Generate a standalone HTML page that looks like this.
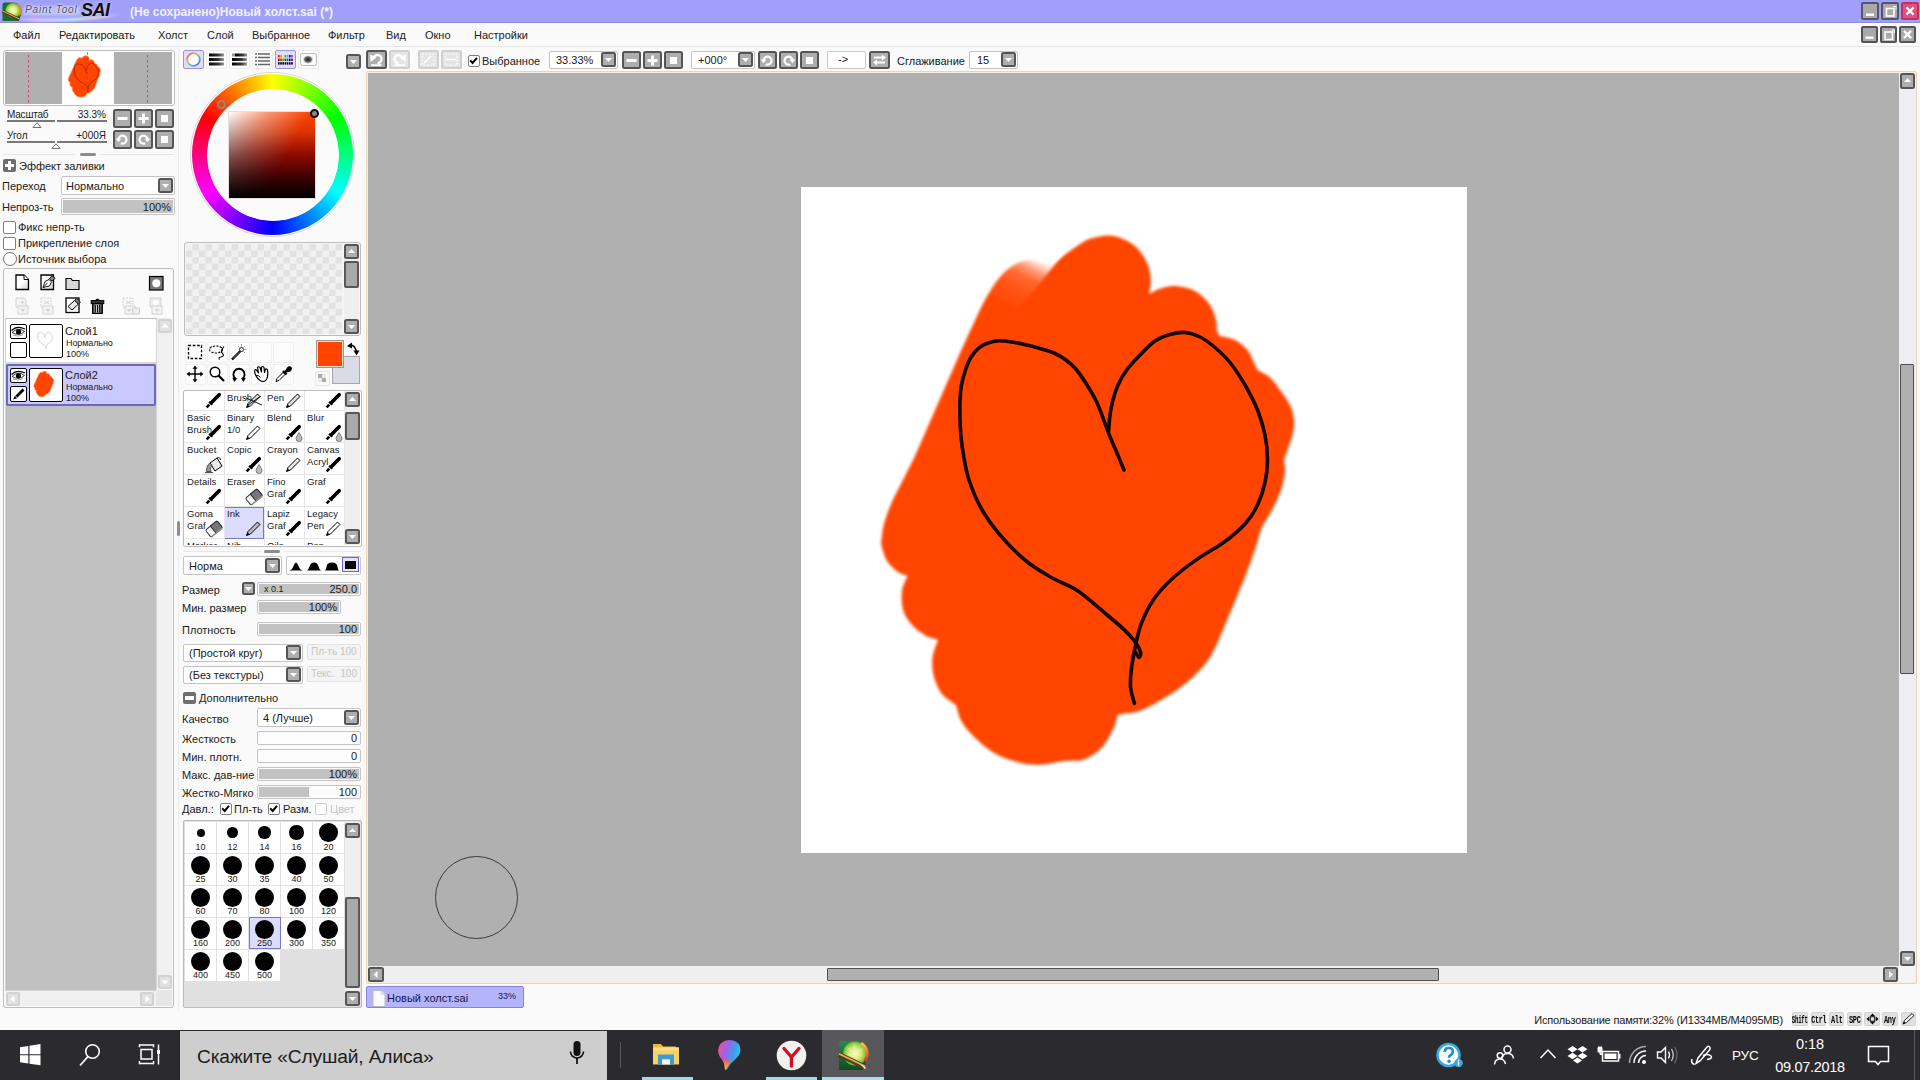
<!DOCTYPE html>
<html lang="ru"><head><meta charset="utf-8"><title>PaintTool SAI</title>
<style>
*{box-sizing:content-box;margin:0;padding:0}
html,body{width:1920px;height:1080px;overflow:hidden;background:#fafafa;font-family:"Liberation Sans",sans-serif;font-size:11px;color:#202020}
div,span,i{position:absolute}
.t{white-space:nowrap;line-height:13px;font-size:11px;color:#202020}
.b{background:#aeaeae;border:2px solid #555;border-radius:2.500px}
.bd{background:#e4e4e4;border:2px solid #d0d0d0;border-radius:2px}
.sl{border:1px solid #c4c4c4;border-radius:2px;background:#fcfcfc;overflow:hidden;white-space:nowrap;font-size:11px;line-height:13px}
.sl i{left:1px;top:1px;bottom:1px;background:#c2c2c2}
.sl .r{right:3px;top:50%;margin-top:-6px}
.sl .l{left:6px;top:50%;margin-top:-6px;font-size:9px}
.cb{border:1px solid #c4c4c4;border-radius:2px;background:#fff;white-space:nowrap;font-size:11px;line-height:13px}
.cb span{top:50%;margin-top:-6px}
.pn{border:1px solid #cfcfcf;border-radius:2px}
</style></head>
<body>
<div style="left:0px;top:0px;width:1920px;height:22px;background:#a0a0fb"></div>
<div style="left:0px;top:22px;width:1920px;height:1px;background:#8c8cd8"></div>
<svg width="20" height="19" viewBox="0 0 20 19" style="position:absolute;left:2px;top:2px;overflow:visible" ><defs><radialGradient id="lg" cx="0.500" cy="0.500" r="0.550"><stop offset="0" stop-color="#fbfad0"/><stop offset="0.450" stop-color="#dcec70"/><stop offset="0.800" stop-color="#7cc840"/><stop offset="1" stop-color="#38a038"/></radialGradient></defs>
<path d="M0.500 3q0-2.500 2.500-2.500h8q8.500 0.500 8.500 9q0 4-1.500 6l-1.500 3.500h-16z" fill="#1a6a34"/><circle cx="11" cy="8.500" r="7.600" fill="url(#lg)"/><path d="M15 2.200a7.600 7.600 0 0 1 2.200 11" fill="none" stroke="#f08830" stroke-width="1.800"/><path d="M0.500 9.500l17 8" stroke="#5a3a18" stroke-width="3.200"/><path d="M0.500 9l17 8" stroke="#d8b868" stroke-width="1"/></svg>
<svg width="115" height="20" viewBox="0 0 115 20" style="position:absolute;left:18px;top:2px;overflow:visible" ><defs><linearGradient id="sw" x1="0" x2="1"><stop offset="0" stop-color="#e8d0f8" stop-opacity="0.200"/><stop offset="0.150" stop-color="#f0c8e8"/><stop offset="0.350" stop-color="#c8e0ff"/><stop offset="0.550" stop-color="#d8f8d0"/><stop offset="0.750" stop-color="#fff0c0"/><stop offset="0.900" stop-color="#f8c0e0"/><stop offset="1" stop-color="#a0a0fb" stop-opacity="0"/></linearGradient><filter id="swb"><feGaussianBlur stdDeviation="0.800"/></filter></defs>
<path d="M2 15.500 Q50 19.500 108 11.500 Q62 22 2 18.500z" fill="url(#sw)" filter="url(#swb)"/><path d="M6 6 Q30 2 62 5 L62 13 Q30 15 4 13z" fill="#e4e4ff" opacity=".450" filter="url(#swb)"/></svg>
<div class="t" style="left:25px;top:3px;font-style:italic;font-size:10px;letter-spacing:0.850px;color:#505064;line-height:13px;text-shadow:0 0 2px #e8e8ff,0 0 3px #e8e8ff">Paint Tool</div>
<div class="t" style="left:81px;top:-1px;font-style:italic;font-weight:bold;font-size:18px;letter-spacing:-0.500px;color:#101010;line-height:22px;text-shadow:0 0 3px #d8d8ff">SAI</div>
<div class="t" style="left:130px;top:5px;font-weight:bold;color:#f2f2ff;font-size:12px;line-height:14px;letter-spacing:0.020px">(Не сохранено)Новый холст.sai (*)</div>
<div style="left:1861px;top:2px;width:14px;height:14px;background:#a9a9a9;border:2px solid #55556a;border-radius:2px"><svg width="14" height="14" style="position:absolute;left:0;top:0"><rect x="3.0" y="9.5" width="8" height="2.4" fill="#fff"/></svg></div>
<div style="left:1881px;top:2px;width:14px;height:14px;background:#a9a9a9;border:2px solid #55556a;border-radius:2px"><svg width="14" height="14" style="position:absolute;left:0;top:0"><rect x="3.5" y="4.5" width="7.5" height="7.5" fill="none" stroke="#fff" stroke-width="1.6"/><path d="M10.0 2.5h3v3" fill="none" stroke="#fff" stroke-width="1"/></svg></div>
<div style="left:1901px;top:2px;width:14px;height:14px;background:#e0507a;border:2px solid #c03060;border-radius:2px"><svg width="14" height="14" style="position:absolute;left:0;top:0"><path d="M3.4000000000000004 3.4000000000000004l7.2 7.2m0 -7.2l-7.2 7.2" stroke="#fff" stroke-width="2.2" fill="none"/></svg></div>
<div class="t" style="left:13px;top:29px;">Файл</div>
<div class="t" style="left:59px;top:29px;">Редактировать</div>
<div class="t" style="left:158px;top:29px;">Холст</div>
<div class="t" style="left:207px;top:29px;">Слой</div>
<div class="t" style="left:252px;top:29px;">Выбранное</div>
<div class="t" style="left:328px;top:29px;">Фильтр</div>
<div class="t" style="left:386px;top:29px;">Вид</div>
<div class="t" style="left:425px;top:29px;">Окно</div>
<div class="t" style="left:474px;top:29px;">Настройки</div>
<div style="left:0px;top:46px;width:1920px;height:1px;background:#e6e6e6"></div>
<div style="left:1861px;top:26px;width:13px;height:13px;background:#a9a9a9;border:2px solid #545454;border-radius:2px"><svg width="13" height="13" style="position:absolute;left:0;top:0"><rect x="2.5" y="8.5" width="8" height="2.4" fill="#fff"/></svg></div>
<div style="left:1880px;top:26px;width:13px;height:13px;background:#a9a9a9;border:2px solid #545454;border-radius:2px"><svg width="13" height="13" style="position:absolute;left:0;top:0"><rect x="3.0" y="4.0" width="7.5" height="7.5" fill="none" stroke="#fff" stroke-width="1.6"/><path d="M9.5 2.0h3v3" fill="none" stroke="#fff" stroke-width="1"/></svg></div>
<div style="left:1899px;top:26px;width:13px;height:13px;background:#a9a9a9;border:2px solid #545454;border-radius:2px"><svg width="13" height="13" style="position:absolute;left:0;top:0"><path d="M2.9000000000000004 2.9000000000000004l7.2 7.2m0 -7.2l-7.2 7.2" stroke="#fff" stroke-width="2.2" fill="none"/></svg></div>
<div style="left:3px;top:50px;width:170px;height:54px;border:1px solid #bdbdbd;border-radius:3px;background:#fdfdfd"></div>
<div style="left:5px;top:52px;width:167px;height:52px;background:#b0b0b0"></div>
<div style="left:62px;top:52px;width:52px;height:52px;background:#fff"></div>
<svg width="52" height="52" viewBox="0 0 52 52" style="position:absolute;left:62px;top:52px"><path d="M6.2 27.9C6.3 27.6 6.3 26.9 6.5 26.3C6.6 25.8 6.9 25.2 7.1 24.6C7.4 24.0 7.7 23.5 8.0 22.9C8.3 22.3 8.6 21.7 8.9 21.0C9.2 20.3 9.6 19.3 10.0 18.5C10.4 17.7 10.7 16.8 11.1 16.0C11.5 15.2 11.9 14.2 12.2 13.5C12.5 12.8 12.7 12.4 12.9 11.9C13.1 11.5 13.1 11.4 13.4 10.9C13.6 10.3 14.0 9.4 14.4 8.8C14.7 8.2 15.0 7.7 15.3 7.3C15.7 6.8 16.0 6.5 16.3 6.3C16.6 6.0 17.0 5.9 17.3 5.8C17.6 5.7 18.0 5.7 18.3 5.7C18.6 5.7 18.9 6.0 19.2 6.0C19.5 6.0 19.7 5.9 19.9 5.8C20.2 5.7 20.3 5.5 20.7 5.2C21.1 5.0 21.8 4.4 22.2 4.2C22.6 4.0 22.8 4.0 23.2 3.9C23.5 3.8 23.8 3.8 24.1 3.8C24.5 3.8 24.8 3.9 25.1 4.0C25.4 4.2 25.8 4.3 26.1 4.6C26.4 4.9 26.7 5.3 26.9 5.6C27.1 6.0 27.2 6.3 27.2 6.7C27.3 7.0 27.3 7.4 27.3 7.7C27.3 7.9 27.2 8.2 27.2 8.3C27.3 8.3 27.7 8.0 28.0 7.9C28.3 7.8 28.7 7.7 29.0 7.7C29.3 7.7 29.7 7.8 30.0 7.8C30.3 7.9 30.6 8.0 31.0 8.2C31.3 8.5 31.7 8.9 31.9 9.2C32.2 9.6 32.3 10.0 32.4 10.4C32.5 10.7 32.4 11.0 32.5 11.2C32.5 11.5 32.7 11.6 32.7 11.6C32.9 11.7 33.5 11.8 33.9 11.9C34.2 12.1 34.6 12.4 34.9 12.7C35.1 13.0 35.2 13.4 35.4 13.7C35.5 14.0 35.6 14.2 35.6 14.3C35.8 14.4 36.3 14.6 36.6 14.9C36.9 15.1 37.1 15.5 37.4 15.8C37.7 16.2 38.0 16.6 38.2 17.0C38.4 17.4 38.5 17.8 38.5 18.2C38.5 18.6 38.5 19.0 38.4 19.4C38.3 19.8 38.1 20.2 38.0 20.5C37.9 20.9 37.8 21.2 37.7 21.3C37.7 21.4 37.8 21.8 37.8 22.1C37.8 22.4 37.7 22.9 37.6 23.3C37.5 23.7 37.3 24.0 37.2 24.4C37.0 24.8 36.7 25.3 36.5 25.6C36.3 26.0 36.1 26.3 35.9 26.7C35.8 27.1 35.7 27.5 35.5 28.1C35.3 28.7 35.0 29.5 34.7 30.3C34.4 31.1 34.1 31.9 33.7 32.7C33.4 33.5 33.0 34.5 32.7 35.1C32.4 35.8 32.2 36.3 31.9 36.8C31.6 37.3 31.3 37.6 30.9 38.0C30.5 38.4 30.0 38.8 29.5 39.2C29.0 39.6 28.4 39.9 27.9 40.2C27.3 40.5 26.9 40.8 26.4 40.9C26.0 41.1 25.5 41.1 25.2 41.1C24.9 41.2 24.8 41.2 24.7 41.2C24.7 41.4 24.6 41.8 24.4 42.2C24.2 42.6 23.9 43.3 23.6 43.6C23.3 44.0 22.9 44.3 22.6 44.5C22.3 44.7 22.1 44.7 21.8 44.8C21.4 44.8 21.1 44.8 20.6 44.8C20.0 44.9 19.2 45.1 18.6 45.1C18.0 45.1 17.4 45.0 16.9 44.9C16.3 44.8 15.7 44.5 15.1 44.2C14.6 43.9 14.1 43.5 13.6 43.0C13.2 42.6 12.8 42.2 12.5 41.7C12.3 41.3 12.2 40.7 12.1 40.4C11.9 40.3 11.3 39.9 11.0 39.6C10.7 39.2 10.5 38.7 10.4 38.3C10.3 37.8 10.2 37.2 10.3 36.8C10.3 36.3 10.6 35.6 10.7 35.3C10.5 35.3 10.1 35.2 9.7 35.0C9.4 34.8 8.9 34.5 8.6 34.2C8.4 33.8 8.1 33.5 8.0 33.1C7.9 32.6 7.8 32.0 7.9 31.5C7.9 31.1 8.2 30.6 8.3 30.4C8.2 30.3 7.8 30.2 7.6 30.0C7.3 29.8 6.9 29.5 6.7 29.2C6.5 28.8 6.3 28.1 6.2 27.9Z" fill="#ff4500" stroke="#ff8a50" stroke-width="0.800"/><path d="M25.2 22.1C25.1 21.9 24.9 21.2 24.7 20.8C24.5 20.3 24.3 20.0 24.1 19.5C23.9 19.0 23.8 18.5 23.6 18.0C23.4 17.6 23.2 17.1 23.0 16.7C22.8 16.2 22.6 15.9 22.3 15.5C22.1 15.1 21.8 14.6 21.5 14.3C21.3 14.0 21.0 13.7 20.7 13.5C20.4 13.3 20.1 13.1 19.8 13.0C19.4 12.8 19.0 12.7 18.7 12.6C18.3 12.5 18.0 12.4 17.6 12.3C17.3 12.3 16.8 12.2 16.5 12.1C16.1 12.0 15.8 12.0 15.5 12.0C15.1 12.0 14.9 12.1 14.6 12.2C14.3 12.3 14.1 12.4 13.9 12.6C13.7 12.7 13.4 13.0 13.3 13.3C13.1 13.6 13.0 13.9 12.8 14.3C12.7 14.7 12.6 15.1 12.5 15.5C12.5 15.9 12.4 16.2 12.4 16.7C12.4 17.1 12.4 17.6 12.4 18.0C12.4 18.5 12.4 19.0 12.5 19.5C12.5 20.0 12.6 20.6 12.7 21.2C12.8 21.7 12.9 22.2 13.1 22.9C13.3 23.5 13.6 24.3 14.1 25.1C14.5 25.8 15.0 26.5 15.6 27.2C16.2 27.9 16.9 28.6 17.5 29.2C18.2 29.7 18.8 30.1 19.5 30.5C20.2 30.8 20.9 31.1 21.6 31.5C22.3 32.0 23.2 32.8 23.8 33.3C24.4 33.8 24.8 34.2 25.2 34.6C25.6 34.9 25.8 35.2 26.0 35.4C26.2 35.7 26.4 36.1 26.5 36.3C26.6 36.5 26.4 36.7 26.4 36.7C26.3 36.7 26.2 36.4 26.2 36.4" fill="none" stroke="#601000" stroke-width="0.500"/><path d="M24.0 19.1C24.0 18.8 24.1 18.2 24.1 17.8C24.2 17.4 24.2 17.1 24.3 16.7C24.4 16.3 24.6 15.9 24.8 15.5C24.9 15.1 25.1 14.7 25.4 14.3C25.7 13.9 26.1 13.5 26.5 13.1C26.8 12.7 27.2 12.3 27.6 12.0C28.0 11.8 28.4 11.6 28.8 11.5C29.2 11.4 29.6 11.3 30.0 11.4C30.4 11.4 30.8 11.5 31.2 11.7C31.5 11.9 31.9 12.2 32.3 12.5C32.7 12.9 33.1 13.2 33.5 13.7C33.9 14.2 34.3 14.8 34.7 15.5C35.0 16.1 35.4 16.8 35.6 17.4C35.9 18.1 36.1 18.7 36.2 19.4C36.4 20.0 36.4 20.7 36.4 21.3C36.4 21.9 36.4 22.5 36.2 23.1C36.1 23.7 35.9 24.3 35.6 24.8C35.4 25.4 35.2 25.8 34.7 26.2C34.3 26.7 33.7 27.2 33.1 27.7C32.5 28.2 31.6 28.6 30.9 29.1C30.2 29.6 29.4 30.1 28.9 30.7C28.3 31.2 27.8 31.7 27.5 32.3C27.1 32.9 26.8 33.6 26.5 34.2C26.3 34.7 26.3 35.2 26.1 35.8C26.0 36.3 25.9 36.8 25.8 37.4C25.8 37.9 25.7 38.5 25.7 39.0C25.8 39.5 26.0 40.1 26.0 40.3" fill="none" stroke="#601000" stroke-width="0.500"/></svg>
<svg width="167" height="52" viewBox="0 0 167 52" style="position:absolute;left:5px;top:52px;overflow:visible" ><path d="M23.5 3v48M142.5 3v48" stroke="#e0407a" stroke-width="1" stroke-dasharray="2.5 2.5" fill="none"/><path d="M82.5 0v30" stroke="#e03060" stroke-width="1" stroke-dasharray="3 2" opacity=".7"/></svg>
<div class="t" style="left:7px;top:108px;font-size:10px;letter-spacing:-0.2px">Масштаб</div>
<div class="t" style="right:1814px;top:108px;font-size:10px">33.3%</div>
<div style="left:7px;top:120px;width:48px;height:2px;background:#787878"></div>
<div style="left:57px;top:120px;width:50px;height:2px;background:#787878"></div>
<svg width="11" height="6" viewBox="0 0 11 6" style="position:absolute;left:32px;top:122px;overflow:visible" ><path d="M1 5.5L5 0.8L9 5.5z" fill="#fff" stroke="#707070" stroke-width="1"/></svg>
<div class="t" style="left:7px;top:129px;font-size:10px">Угол</div>
<div class="t" style="right:1814px;top:129px;font-size:10px">+000Я</div>
<div style="left:7px;top:141px;width:48px;height:2px;background:#787878"></div>
<div style="left:57px;top:141px;width:50px;height:2px;background:#787878"></div>
<svg width="11" height="6" viewBox="0 0 11 6" style="position:absolute;left:51px;top:143px;overflow:visible" ><path d="M1 5.5L5 0.8L9 5.5z" fill="#fff" stroke="#707070" stroke-width="1"/></svg>
<div class="b" style="left:113px;top:109px;width:15px;height:15px"><svg width="15" height="15" style="position:absolute;left:0;top:0"><rect x="2.5" y="6" width="10" height="3" fill="#fff"/></svg></div>
<div class="b" style="left:134px;top:109px;width:15px;height:15px"><svg width="15" height="15" style="position:absolute;left:0;top:0"><rect x="2.5" y="6" width="10" height="3" fill="#fff"/><rect x="6" y="2.5" width="3" height="10" fill="#fff"/></svg></div>
<div class="b" style="left:155px;top:109px;width:15px;height:15px"><svg width="15" height="15" style="position:absolute;left:0;top:0"><rect x="4" y="4" width="7" height="7" fill="#fff"/></svg></div>
<div class="b" style="left:113px;top:130px;width:15px;height:15px"><svg width="15" height="15" style="position:absolute;left:0;top:0"><path d="M3.500 7.500A4 4 0 1 1 5.800 11.200" fill="none" stroke="#fff" stroke-width="2.200"/><path d="M0.600 6.400h5.800l-2.900 3.800z" fill="#fff"/></svg></div>
<div class="b" style="left:134px;top:130px;width:15px;height:15px"><svg width="15" height="15" style="position:absolute;left:0;top:0"><path d="M11.500 7.500A4 4 0 1 0 9.200 11.200" fill="none" stroke="#fff" stroke-width="2.200"/><path d="M14.400 6.400h-5.800l2.900 3.800z" fill="#fff"/></svg></div>
<div class="b" style="left:155px;top:130px;width:15px;height:15px"><svg width="15" height="15" style="position:absolute;left:0;top:0"><rect x="4" y="4" width="7" height="7" fill="#fff"/></svg></div>
<div style="left:3px;top:154px;width:72px;height:1px;background:#e4e4e4"></div>
<div style="left:100px;top:154px;width:74px;height:1px;background:#e4e4e4"></div>
<div style="left:80px;top:153px;width:16px;height:3px;background:#8c8c8c;border-radius:2px"></div>
<div style="left:3px;top:159px;width:13px;height:13px;background:#6e6e6e;border-radius:2px"></div>
<div style="left:5px;top:164px;width:9px;height:3px;background:#fff"></div>
<div style="left:8px;top:161px;width:3px;height:9px;background:#fff"></div>
<div class="t" style="left:19px;top:160px;">Эффект заливки</div>
<div class="t" style="left:2px;top:180px;">Переход</div>
<div class="cb" style="left:61px;top:176px;width:112px;height:17px"><span style="left:4px">Нормально</span></div>
<div class="b" style="left:158px;top:178px;width:11px;height:11px"><svg width="11" height="11" style="position:absolute;left:0;top:0"><path d="M2.0 4.0h7l-3.5 4z" fill="#fff"/></svg></div>
<div class="t" style="left:2px;top:201px;">Непроз-ть</div>
<div class="sl" style="left:61px;top:198px;width:112px;height:15px"><i style="width:110px"></i><span class="l"></span><span class="r">100%</span></div>
<div style="left:3px;top:221px;width:11px;height:11px;border:1px solid #808080;border-radius:2px;background:#fff"></div>
<div class="t" style="left:18px;top:221px;">Фикс непр-ть</div>
<div style="left:3px;top:237px;width:11px;height:11px;border:1px solid #808080;border-radius:2px;background:#fff"></div>
<div class="t" style="left:18px;top:237px;">Прикрепление слоя</div>
<div style="left:3px;top:252px;width:12px;height:12px;border:1px solid #707070;border-radius:7px;background:#fff"></div>
<div class="t" style="left:18px;top:253px;">Источник выбора</div>
<div style="left:3px;top:268px;width:169px;height:738px;border:1px solid #bcbcbc;border-radius:3px;background:#fafafa"></div>
<svg width="15" height="17" viewBox="0 0 15 17" style="position:absolute;left:15px;top:274px;overflow:visible" ><defs><linearGradient id="pg" x1="0" y1="0" x2="1" y2="1"><stop offset="0.5" stop-color="#fff"/><stop offset="1" stop-color="#ccc"/></linearGradient></defs><path d="M1 1h8l4.5 4.5v10h-12.5z" fill="url(#pg)" stroke="#000" stroke-width="1.3"/><path d="M9 1v4.5h4.5" fill="#fff" stroke="#000" stroke-width="1"/></svg>
<svg width="16" height="17" viewBox="0 0 16 17" style="position:absolute;left:40px;top:274px;overflow:visible" ><path d="M1 1h12.5v14.5h-12.5z" fill="url(#pg)" stroke="#000" stroke-width="1.3"/><path d="M3 13.5l2-6l4-2l2.5 2.5l-2 4z" fill="#fff" stroke="#000" stroke-width="0.9"/><path d="M3 13.5l4.5-4.5" stroke="#000" stroke-width="0.8"/><path d="M9.5 5l2.5-3.5l3 3l-3 2.5z" fill="#888" stroke="#000" stroke-width="0.9"/></svg>
<svg width="16" height="14" viewBox="0 0 16 14" style="position:absolute;left:65px;top:277px;overflow:visible" ><path d="M1 12.5v-11h5l1.5 2h6.5v9z" fill="#d8d8d8" stroke="#000" stroke-width="1.2"/></svg>
<svg width="15" height="15" viewBox="0 0 15 15" style="position:absolute;left:149px;top:276px;overflow:visible" ><rect x="0.5" y="0.5" width="13.5" height="13.5" fill="#787878" stroke="#000" stroke-width="1.2"/><circle cx="7.3" cy="7.3" r="4" fill="#fff"/></svg>
<svg width="16" height="18" viewBox="0 0 16 18" style="position:absolute;left:15px;top:297px;overflow:visible" ><path d="M1 1h8l2 2v7h-10z" fill="#f4f4f4" stroke="#d2d2d2"/><path d="M3 9h10v8h-10z" fill="#f4f4f4" stroke="#d2d2d2"/><path d="M5.5 5.5h4m-2-2v4" stroke="#d2d2d2"/><path d="M5.5 12h5l-2.5 3z" fill="#d2d2d2"/></svg>
<svg width="16" height="18" viewBox="0 0 16 18" style="position:absolute;left:40px;top:297px;overflow:visible" ><path d="M1 1h10v9h-10z" fill="#f8f8f8" stroke="#d2d2d2" stroke-dasharray="2 1"/><path d="M3 9h10v8h-10z" fill="#f4f4f4" stroke="#d2d2d2"/><path d="M4 4l5 3m0-3l-5 3" stroke="#d2d2d2"/><path d="M5.5 12h5l-2.5 3z" fill="#d2d2d2"/></svg>
<svg width="16" height="18" viewBox="0 0 16 18" style="position:absolute;left:65px;top:297px;overflow:visible" ><rect x="1" y="1" width="13" height="14.5" fill="#fff" stroke="#000" stroke-width="1.3"/><path d="M3 9.5l6.5-6l4 3.5l-6.5 6z" fill="#e8e8e8" stroke="#000" stroke-width="1"/><path d="M9.5 3.5l2-2l4 3.5l-2 2z" fill="#777" stroke="#000" stroke-width="0.8"/></svg>
<svg width="15" height="18" viewBox="0 0 15 18" style="position:absolute;left:90px;top:297px;overflow:visible" ><defs><linearGradient id="tg" x1="0" x2="1"><stop offset="0" stop-color="#555"/><stop offset="0.450" stop-color="#d8d8d8"/><stop offset="1" stop-color="#444"/></linearGradient></defs><path d="M2.700 6.500h9.600v9.800h-9.600z" fill="url(#tg)" stroke="#000" stroke-width="1.300"/><path d="M5.300 8v7.500M7.500 8v7.500M9.700 8v7.500" stroke="#000" stroke-width="1"/><rect x="1.200" y="3.600" width="12.600" height="3" fill="#333" stroke="#000" stroke-width="1"/><path d="M5.800 3.400q1.700-2.600 3.400 0" fill="none" stroke="#000" stroke-width="1.300"/></svg>
<svg width="18" height="18" viewBox="0 0 18 18" style="position:absolute;left:122px;top:297px;overflow:visible" ><path d="M1 1h10v9h-10z" fill="#f8f8f8" stroke="#d2d2d2" stroke-dasharray="2 1"/><path d="M3 9h10v8h-10z" fill="#f4f4f4" stroke="#d2d2d2"/><path d="M10.500 11h7v6h-7z" fill="#ececec" stroke="#d2d2d2"/><path d="M4 4l5 3m0-3l-5 3" stroke="#d2d2d2"/><path d="M4.5 12h5l-2.5 3z" fill="#d2d2d2"/></svg>
<svg width="16" height="18" viewBox="0 0 16 18" style="position:absolute;left:149px;top:297px;overflow:visible" ><path d="M1 1h11v9h-11z" fill="#ececec" stroke="#d2d2d2"/><circle cx="6.500" cy="5.500" r="2.800" fill="#fff"/><path d="M3 9h10v8h-10z" fill="#f6f6f6" stroke="#d2d2d2"/><path d="M5.500 13h5m-2.500-2.500v5" stroke="#d2d2d2"/></svg>
<div style="left:5px;top:318px;width:150px;height:671px;background:#c0c0c0;border:1px solid #d4d4d4;border-top-color:#c0c0c0"></div>
<div style="left:6px;top:319px;width:150px;height:43px;background:#fff"></div>
<div style="left:6px;top:362px;width:150px;height:2px;background:#d8d8d8"></div>
<div style="left:6px;top:364px;width:146px;height:37.5px;background:#c9c9ff;border:2px solid #6c66c4;border-radius:2px"></div>
<div style="left:10px;top:324px;width:15px;height:13px;border:1px solid #000;border-radius:2px;background:#fff;overflow:hidden"><svg width="17" height="15" viewBox="0 0 17 15" style="position:absolute;left:0;top:0;left:-1px;top:-1px"><path d="M2 8.500 Q8 2.500 14.500 7.500 Q9 12.500 2 8.500z" fill="#fff" stroke="#000" stroke-width="0.8"/><circle cx="8.500" cy="7.800" r="2.600" fill="#000"/><path d="M1.500 6.500 Q7 1 15 5" fill="none" stroke="#000" stroke-width="1.100"/><path d="M3 11 Q8 13.500 13 10.500" fill="none" stroke="#555" stroke-width="0.600"/></svg></div>
<div style="left:10px;top:342px;width:15px;height:14px;border:1px solid #000;border-radius:2px;background:#fff;overflow:hidden"></div>
<div style="left:29px;top:324px;width:32px;height:32px;border:1px solid #000;border-radius:2px;background:#fff;overflow:hidden"><svg width="32" height="32" viewBox="0 0 32 32" style="position:absolute;left:0;top:0;"><path d="M15.5 13.6C15.5 13.5 15.3 13.0 15.2 12.8C15.1 12.5 15.0 12.3 14.8 12.0C14.7 11.7 14.6 11.4 14.5 11.1C14.4 10.8 14.3 10.5 14.2 10.3C14.0 10.0 13.9 9.8 13.7 9.5C13.6 9.3 13.4 9.0 13.2 8.8C13.1 8.6 12.9 8.4 12.7 8.3C12.6 8.2 12.4 8.1 12.2 8.0C11.9 7.9 11.7 7.8 11.5 7.8C11.3 7.7 11.1 7.6 10.8 7.6C10.6 7.5 10.4 7.5 10.1 7.4C9.9 7.4 9.7 7.4 9.5 7.4C9.3 7.4 9.1 7.4 9.0 7.5C8.8 7.6 8.7 7.6 8.6 7.7C8.4 7.8 8.3 8.0 8.2 8.2C8.1 8.3 8.0 8.6 7.9 8.8C7.8 9.0 7.8 9.3 7.7 9.5C7.7 9.8 7.7 10.0 7.6 10.3C7.6 10.5 7.6 10.8 7.6 11.1C7.6 11.4 7.7 11.7 7.7 12.0C7.7 12.3 7.8 12.7 7.8 13.0C7.9 13.4 7.9 13.7 8.1 14.1C8.2 14.5 8.4 15.0 8.6 15.4C8.9 15.9 9.2 16.3 9.6 16.7C9.9 17.2 10.4 17.6 10.8 17.9C11.2 18.3 11.6 18.5 12.0 18.7C12.4 19.0 12.9 19.1 13.3 19.4C13.8 19.7 14.3 20.2 14.7 20.5C15.0 20.8 15.3 21.0 15.5 21.3C15.7 21.5 15.9 21.6 16.0 21.8C16.2 22.0 16.3 22.2 16.3 22.3C16.3 22.5 16.3 22.6 16.2 22.6C16.2 22.6 16.1 22.4 16.1 22.4" fill="none" stroke="#aaa" stroke-width="0.500"/><path d="M14.8 11.7C14.8 11.6 14.8 11.2 14.8 11.0C14.9 10.7 14.9 10.5 15.0 10.3C15.0 10.0 15.1 9.8 15.2 9.5C15.3 9.3 15.5 9.0 15.6 8.8C15.8 8.6 16.1 8.3 16.3 8.1C16.5 7.8 16.8 7.6 17.0 7.4C17.2 7.2 17.5 7.2 17.7 7.1C18.0 7.0 18.2 7.0 18.5 7.0C18.7 7.0 18.9 7.1 19.2 7.2C19.4 7.3 19.7 7.5 19.9 7.7C20.1 7.9 20.4 8.1 20.6 8.4C20.9 8.7 21.1 9.1 21.3 9.5C21.6 9.9 21.8 10.3 21.9 10.7C22.1 11.1 22.2 11.5 22.3 11.9C22.4 12.3 22.4 12.7 22.4 13.1C22.4 13.5 22.4 13.8 22.3 14.2C22.2 14.6 22.1 15.0 21.9 15.3C21.8 15.6 21.6 15.9 21.4 16.1C21.1 16.4 20.8 16.7 20.4 17.0C20.0 17.3 19.4 17.6 19.0 17.9C18.6 18.2 18.1 18.6 17.8 18.9C17.4 19.2 17.1 19.5 16.9 19.9C16.7 20.2 16.5 20.7 16.3 21.0C16.2 21.4 16.2 21.7 16.1 22.0C16.0 22.3 15.9 22.7 15.9 23.0C15.9 23.3 15.8 23.7 15.8 24.0C15.9 24.3 16.0 24.7 16.0 24.8" fill="none" stroke="#aaa" stroke-width="0.500"/></svg></div>
<div style="left:10px;top:368px;width:15px;height:13px;border:1px solid #000;border-radius:2px;background:#fff;overflow:hidden"><svg width="17" height="15" viewBox="0 0 17 15" style="position:absolute;left:0;top:0;left:-1px;top:-1px"><path d="M2 8.500 Q8 2.500 14.500 7.500 Q9 12.500 2 8.500z" fill="#fff" stroke="#000" stroke-width="0.8"/><circle cx="8.500" cy="7.800" r="2.600" fill="#000"/><path d="M1.500 6.500 Q7 1 15 5" fill="none" stroke="#000" stroke-width="1.100"/><path d="M3 11 Q8 13.500 13 10.500" fill="none" stroke="#555" stroke-width="0.600"/></svg></div>
<div style="left:10px;top:386px;width:15px;height:14px;border:1px solid #000;border-radius:2px;background:#fff;overflow:hidden"><svg width="17" height="16" viewBox="0 0 17 16" style="position:absolute;left:0;top:0;left:-1px;top:-1px"><path d="M3 13.500l1.500-3l8-8l2 2l-8 8z" fill="#000"/><path d="M5.200 9.800l1.800 1.800" stroke="#fff" stroke-width="1"/></svg></div>
<div style="left:29px;top:368px;width:32px;height:32px;border:1px solid #000;border-radius:2px;background:#fff;overflow:hidden"><svg width="32" height="32" viewBox="0 0 32 32" style="position:absolute;left:0;top:0;"><path d="M3.8 17.2C3.9 17.0 3.9 16.5 4.0 16.2C4.1 15.9 4.2 15.5 4.4 15.1C4.5 14.8 4.7 14.4 4.9 14.1C5.1 13.7 5.3 13.4 5.5 12.9C5.7 12.5 5.9 11.9 6.2 11.4C6.4 10.9 6.6 10.4 6.8 9.8C7.0 9.3 7.3 8.7 7.5 8.3C7.7 7.9 7.8 7.6 7.9 7.4C8.1 7.1 8.1 7.0 8.2 6.7C8.4 6.4 8.6 5.8 8.8 5.4C9.0 5.1 9.2 4.7 9.4 4.5C9.6 4.2 9.8 4.0 10.0 3.9C10.2 3.7 10.4 3.6 10.6 3.6C10.8 3.5 11.0 3.5 11.2 3.5C11.4 3.5 11.7 3.7 11.8 3.7C12.0 3.7 12.1 3.6 12.3 3.6C12.4 3.5 12.5 3.4 12.7 3.2C13.0 3.0 13.4 2.7 13.6 2.6C13.9 2.5 14.0 2.4 14.2 2.4C14.4 2.4 14.6 2.3 14.8 2.3C15.0 2.3 15.2 2.4 15.4 2.5C15.6 2.6 15.9 2.7 16.0 2.8C16.2 3.0 16.4 3.2 16.5 3.4C16.6 3.7 16.7 3.9 16.8 4.1C16.8 4.3 16.8 4.5 16.8 4.7C16.8 4.9 16.7 5.1 16.7 5.1C16.8 5.1 17.1 5.0 17.2 4.9C17.4 4.8 17.6 4.8 17.8 4.8C18.1 4.7 18.3 4.8 18.5 4.8C18.7 4.9 18.9 4.9 19.1 5.1C19.3 5.2 19.5 5.4 19.7 5.7C19.8 5.9 19.9 6.2 19.9 6.4C20.0 6.6 20.0 6.8 20.0 6.9C20.0 7.0 20.1 7.1 20.1 7.2C20.3 7.2 20.6 7.2 20.9 7.4C21.1 7.5 21.3 7.7 21.5 7.8C21.6 8.0 21.7 8.3 21.8 8.4C21.8 8.6 21.9 8.7 21.9 8.8C22.0 8.9 22.4 9.0 22.5 9.2C22.7 9.3 22.9 9.5 23.0 9.8C23.2 10.0 23.4 10.2 23.5 10.5C23.6 10.7 23.7 11.0 23.7 11.2C23.7 11.4 23.7 11.7 23.6 11.9C23.6 12.2 23.4 12.4 23.4 12.6C23.3 12.8 23.2 13.0 23.2 13.1C23.2 13.2 23.3 13.4 23.3 13.6C23.2 13.8 23.2 14.1 23.1 14.3C23.1 14.6 23.0 14.8 22.9 15.0C22.8 15.3 22.6 15.6 22.5 15.8C22.4 16.0 22.2 16.2 22.1 16.4C22.0 16.7 22.0 16.9 21.9 17.3C21.7 17.7 21.6 18.2 21.4 18.6C21.2 19.1 21.0 19.6 20.8 20.1C20.6 20.6 20.3 21.2 20.1 21.6C19.9 22.0 19.8 22.3 19.6 22.6C19.4 22.9 19.3 23.1 19.0 23.4C18.8 23.6 18.4 23.9 18.1 24.1C17.8 24.3 17.5 24.6 17.1 24.7C16.8 24.9 16.5 25.1 16.3 25.2C16.0 25.3 15.7 25.3 15.5 25.3C15.3 25.3 15.3 25.4 15.2 25.4C15.2 25.5 15.1 25.7 15.0 26.0C14.9 26.2 14.7 26.6 14.5 26.9C14.3 27.1 14.1 27.2 13.9 27.4C13.7 27.5 13.6 27.5 13.4 27.6C13.2 27.6 13.0 27.5 12.7 27.6C12.3 27.6 11.8 27.7 11.5 27.8C11.1 27.8 10.7 27.7 10.4 27.6C10.0 27.5 9.7 27.4 9.3 27.2C9.0 27.0 8.7 26.7 8.4 26.5C8.1 26.2 7.9 26.0 7.7 25.7C7.6 25.4 7.5 25.0 7.4 24.9C7.3 24.8 7.0 24.6 6.8 24.4C6.6 24.1 6.5 23.8 6.4 23.5C6.3 23.3 6.3 22.9 6.3 22.6C6.4 22.3 6.5 21.9 6.6 21.8C6.5 21.7 6.2 21.7 6.0 21.5C5.8 21.4 5.5 21.2 5.3 21.0C5.1 20.8 5.0 20.6 4.9 20.3C4.8 20.1 4.8 19.7 4.9 19.4C4.9 19.1 5.1 18.8 5.1 18.7C5.0 18.6 4.8 18.6 4.7 18.5C4.5 18.4 4.3 18.2 4.1 17.9C4.0 17.7 3.9 17.3 3.8 17.2Z" fill="#ff4500" stroke="#ff7a40" stroke-width="0.600"/></svg></div>
<div class="t" style="left:65px;top:325px;font-size:11px">Слой1</div>
<div class="t" style="left:66px;top:338px;font-size:9px;letter-spacing:-0.1px;line-height:11px">Нормально</div>
<div class="t" style="left:66px;top:349px;font-size:9px;line-height:11px">100%</div>
<div class="t" style="left:65px;top:369px;font-size:11px">Слой2</div>
<div class="t" style="left:66px;top:382px;font-size:9px;letter-spacing:-0.1px;line-height:11px">Нормально</div>
<div class="t" style="left:66px;top:393px;font-size:9px;line-height:11px">100%</div>
<div style="left:157px;top:318px;width:15px;height:671px;background:#f0f0f0"></div>
<div style="left:158px;top:319px;width:10px;height:10px;background:#e2e2e2;border:2px solid #d2d2d2;border-radius:2px"><svg width="10" height="10" style="position:absolute;left:0;top:0"><path d="M1.500 6.500h7l-3.500-4z" fill="#fff"/></svg></div>
<div style="left:158px;top:975px;width:10px;height:10px;background:#e2e2e2;border:2px solid #d2d2d2;border-radius:2px"><svg width="10" height="10" style="position:absolute;left:0;top:0"><path d="M1.500 3.500h7l-3.500 4z" fill="#fff"/></svg></div>
<div style="left:6px;top:991px;width:150px;height:15px;background:#f0f0f0"></div>
<div style="left:156px;top:990px;width:16px;height:16px;background:#e6e6e6"></div>
<div style="left:6px;top:992px;width:10px;height:10px;background:#e2e2e2;border:2px solid #d2d2d2;border-radius:2px"><svg width="10" height="10" style="position:absolute;left:0;top:0"><path d="M6.500 1.500v7l-4-3.500z" fill="#fff"/></svg></div>
<div style="left:140px;top:992px;width:10px;height:10px;background:#e2e2e2;border:2px solid #d2d2d2;border-radius:2px"><svg width="10" height="10" style="position:absolute;left:0;top:0"><path d="M3.500 1.500v7l4-3.500z" fill="#fff"/></svg></div>
<div style="left:178px;top:47px;width:1px;height:963px;background:#ececec"></div>
<div style="left:177px;top:521px;width:3px;height:15px;background:#8e8e8e;border-radius:1.500px"></div>
<div style="left:183px;top:50px;width:19px;height:17px;background:#e4dcff;border:1px solid #9a94d8;border-radius:2px"></div>
<div style="left:206px;top:50px;width:19px;height:17px;background:#fcfcfc;border:1px solid #ececec;border-radius:2px"></div>
<div style="left:229px;top:50px;width:19px;height:17px;background:#fcfcfc;border:1px solid #ececec;border-radius:2px"></div>
<div style="left:252px;top:50px;width:19px;height:17px;background:#fcfcfc;border:1px solid #ececec;border-radius:2px"></div>
<div style="left:275px;top:50px;width:19px;height:17px;background:#e4dcff;border:1px solid #9a94d8;border-radius:2px"></div>
<div style="left:298px;top:50px;width:19px;height:17px;background:#fcfcfc;border:1px solid #ececec;border-radius:2px"></div>
<svg width="21" height="19" viewBox="0 0 21 19" style="position:absolute;left:183px;top:50px;overflow:visible" ><defs><linearGradient id="rg" x1="0" y1="0" x2="1" y2="1"><stop offset="0" stop-color="#f04080"/><stop offset="0.35" stop-color="#e0c030"/><stop offset="0.65" stop-color="#40c0e0"/><stop offset="1" stop-color="#8040e0"/></linearGradient></defs><circle cx="10.500" cy="9.500" r="6.300" fill="#fff" stroke="url(#rg)" stroke-width="1.800"/></svg>
<svg width="21" height="19" viewBox="0 0 21 19" style="position:absolute;left:206px;top:50px;overflow:visible" ><defs><linearGradient id="bw" x1="0" x2="1"><stop offset="0" stop-color="#000"/><stop offset="0.6" stop-color="#333"/><stop offset="1" stop-color="#999"/></linearGradient></defs><rect x="3" y="3.500" width="15" height="3" fill="url(#bw)"/><rect x="3" y="8" width="15" height="3" fill="url(#bw)"/><rect x="3" y="12.500" width="15" height="3" fill="url(#bw)"/></svg>
<svg width="21" height="19" viewBox="0 0 21 19" style="position:absolute;left:229px;top:50px;overflow:visible" ><rect x="6" y="3.500" width="12" height="3" fill="url(#bw)"/><rect x="3" y="8" width="15" height="3" fill="url(#bw)"/><rect x="3" y="12.500" width="15" height="3" fill="url(#bw)"/><rect x="3" y="3.500" width="3" height="3" fill="#999"/></svg>
<svg width="21" height="19" viewBox="0 0 21 19" style="position:absolute;left:252px;top:50px;overflow:visible" ><g stroke="#666" stroke-width="1.300"><path d="M3 4h15M3 7.500h15M3 11h15M3 14.500h15" stroke-dasharray="2 1 12 0"/></g></svg>
<svg width="21" height="19" viewBox="0 0 21 19" style="position:absolute;left:275px;top:50px;overflow:visible" ><rect x="3.0" y="5.0" width="1.600" height="2.400" fill="#f00"/><rect x="5.2" y="5.0" width="1.600" height="2.400" fill="#f80"/><rect x="7.4" y="5.0" width="1.600" height="2.400" fill="#ff0"/><rect x="9.6" y="5.0" width="1.600" height="2.400" fill="#0c0"/><rect x="11.8" y="5.0" width="1.600" height="2.400" fill="#0cf"/><rect x="14.0" y="5.0" width="1.600" height="2.400" fill="#00f"/><rect x="16.2" y="5.0" width="1.600" height="2.400" fill="#c0f"/><rect x="3.0" y="8.6" width="1.600" height="2.400" fill="#800"/><rect x="5.2" y="8.6" width="1.600" height="2.400" fill="#840"/><rect x="7.4" y="8.6" width="1.600" height="2.400" fill="#880"/><rect x="9.6" y="8.6" width="1.600" height="2.400" fill="#060"/><rect x="11.8" y="8.6" width="1.600" height="2.400" fill="#068"/><rect x="14.0" y="8.6" width="1.600" height="2.400" fill="#008"/><rect x="16.2" y="8.6" width="1.600" height="2.400" fill="#606"/><rect x="3.0" y="12.2" width="1.600" height="2.400" fill="#000"/><rect x="5.2" y="12.2" width="1.600" height="2.400" fill="#000"/><rect x="7.4" y="12.2" width="1.600" height="2.400" fill="#000"/><rect x="9.6" y="12.2" width="1.600" height="2.400" fill="#000"/><rect x="11.8" y="12.2" width="1.600" height="2.400" fill="#000"/><rect x="14.0" y="12.2" width="1.600" height="2.400" fill="#000"/><rect x="16.2" y="12.2" width="1.600" height="2.400" fill="#000"/></svg>
<svg width="21" height="19" viewBox="0 0 21 19" style="position:absolute;left:298px;top:50px;overflow:visible" ><defs><radialGradient id="sm"><stop offset="0" stop-color="#222"/><stop offset="0.6" stop-color="#666"/><stop offset="1" stop-color="#ccc" stop-opacity="0"/></radialGradient></defs><rect x="2.500" y="3.500" width="16" height="12" rx="2" fill="#fafafa" stroke="#b8b8b8"/><ellipse cx="10" cy="9.500" rx="5.500" ry="4.500" fill="url(#sm)"/></svg>
<div class="b" style="left:346px;top:54px;width:11px;height:11px"><svg width="11" height="11" style="position:absolute;left:0;top:0"><path d="M2.0 4.0h7l-3.5 4z" fill="#fff"/></svg></div>
<div style="left:190px;top:72px;width:163px;height:163px;border-radius:50%;background:#fff;border:1px solid #dcd4dc"></div>
<div style="left:192px;top:74px;width:161px;height:161px;border-radius:50%;background:conic-gradient(#ff0,#0f0 60deg,#0ff 120deg,#00f 180deg,#f0f 240deg,#f00 300deg,#ff0 360deg)"></div>
<div style="left:206.5px;top:88.5px;width:130px;height:130px;border-radius:50%;background:#fbfbfb;border:1px solid #fff"></div>
<div style="left:228px;top:111px;width:86px;height:86px;border:1px solid #e8e0e0;background:linear-gradient(to bottom,#ff4500 0%,#e03400 22%,#8c0a00 50%,#420000 75%,#000 100%)"></div>
<div style="left:229px;top:112px;width:86px;height:86px;background:linear-gradient(to bottom,#fff,#000);-webkit-mask-image:linear-gradient(118deg,#000 0%,rgba(0,0,0,.45) 30%,transparent 62%);mask-image:linear-gradient(118deg,#000 0%,rgba(0,0,0,.45) 30%,transparent 62%)"></div>
<div style="left:217px;top:100px;width:5px;height:5px;border:2px solid #8a8a8a;border-radius:50%"></div>
<div style="left:310px;top:109px;width:5px;height:5px;border:2px solid #111;border-radius:50%;background:#888"></div>
<div style="left:184px;top:242px;width:175px;height:92px;border:1px solid #bcbcbc;border-radius:3px;background:#f6f6f6"></div>
<div style="left:186px;top:244px;width:156px;height:90px;background-color:#f1f1f1;background-image:linear-gradient(45deg,#dedede 25%,transparent 25%,transparent 75%,#dedede 75%),linear-gradient(45deg,#dedede 25%,transparent 25%,transparent 75%,#dedede 75%);background-size:13px 13px;background-position:0 0,6.500px 6.500px;opacity:.85"></div>
<div style="left:344px;top:244px;width:15px;height:90px;background:#efefef"></div>
<div class="b" style="left:344px;top:244px;width:11px;height:11px"><svg width="11" height="11" style="position:absolute;left:0;top:0"><path d="M2 7h7l-3.500-4z" fill="#fff"/></svg></div>
<div class="b" style="left:344px;top:319px;width:11px;height:11px"><svg width="11" height="11" style="position:absolute;left:0;top:0"><path d="M2 4h7l-3.500 4z" fill="#fff"/></svg></div>
<div style="left:344px;top:261px;width:11px;height:23px;background:#a9a9a9;border:2px solid #575757;border-radius:2px"></div>
<div style="left:185px;top:342px;width:19px;height:19px;border:1px solid #f0f0f0;border-radius:2px;background:#fcfcfc"></div>
<div style="left:207px;top:342px;width:19px;height:19px;border:1px solid #f0f0f0;border-radius:2px;background:#fcfcfc"></div>
<div style="left:229px;top:342px;width:19px;height:19px;border:1px solid #f0f0f0;border-radius:2px;background:#fcfcfc"></div>
<div style="left:251px;top:342px;width:19px;height:19px;border:1px solid #f0f0f0;border-radius:2px;background:#fcfcfc"></div>
<div style="left:273px;top:342px;width:19px;height:19px;border:1px solid #f0f0f0;border-radius:2px;background:#fcfcfc"></div>
<div style="left:185px;top:364px;width:19px;height:19px;border:1px solid #f0f0f0;border-radius:2px;background:#fcfcfc"></div>
<div style="left:207px;top:364px;width:19px;height:19px;border:1px solid #f0f0f0;border-radius:2px;background:#fcfcfc"></div>
<div style="left:229px;top:364px;width:19px;height:19px;border:1px solid #f0f0f0;border-radius:2px;background:#fcfcfc"></div>
<div style="left:251px;top:364px;width:19px;height:19px;border:1px solid #f0f0f0;border-radius:2px;background:#fcfcfc"></div>
<div style="left:273px;top:364px;width:19px;height:19px;border:1px solid #f0f0f0;border-radius:2px;background:#fcfcfc"></div>
<svg width="20" height="20" viewBox="0 0 20 20" style="position:absolute;left:185px;top:342px;overflow:visible" ><rect x="3.500" y="3.500" width="13" height="13" fill="none" stroke="#000" stroke-width="1.300" stroke-dasharray="2.600 1.700"/></svg>
<svg width="20" height="20" viewBox="0 0 20 20" style="position:absolute;left:207px;top:342px;overflow:visible" ><ellipse cx="9" cy="7.500" rx="6.500" ry="3.500" fill="none" stroke="#000" stroke-width="1.100" stroke-dasharray="2.200 1.200"/><path d="M17 4.500 Q13 9 15.500 11.500 Q18 14 14 15 Q11 15.500 12.500 17.500" fill="none" stroke="#000" stroke-width="1.100"/></svg>
<svg width="20" height="20" viewBox="0 0 20 20" style="position:absolute;left:229px;top:342px;overflow:visible" ><path d="M3 17.500l8.500-8.500" stroke="#000" stroke-width="2.400"/><path d="M4 16.500l7-7" stroke="#999" stroke-width="0.800"/><circle cx="12.500" cy="7.500" r="2" fill="#fff" stroke="#000" stroke-width="0.800"/><path d="M12.500 2v2.500M17.500 7.500h-2.200M16 4l-1.500 1.500M16 11l-1.500-1.500M9 4l1.500 1.500" stroke="#777" stroke-width="0.700"/></svg>
<svg width="20" height="20" viewBox="0 0 20 20" style="position:absolute;left:185px;top:364px;overflow:visible" ><path d="M10 3v14M3 10h14" stroke="#000" stroke-width="1.400"/><path d="M10 1.500l-2.400 3.200h4.800zM10 18.500l-2.400-3.200h4.800zM1.500 10l3.200-2.400v4.800zM18.500 10l-3.200-2.400v4.800z" fill="#000"/></svg>
<svg width="20" height="20" viewBox="0 0 20 20" style="position:absolute;left:207px;top:364px;overflow:visible" ><circle cx="8" cy="8" r="4.800" fill="#fff" stroke="#000" stroke-width="1.400"/><path d="M11.500 11.500l5.500 5.500" stroke="#000" stroke-width="2.200"/></svg>
<svg width="20" height="20" viewBox="0 0 20 20" style="position:absolute;left:229px;top:364px;overflow:visible" ><path d="M6.800 15 A5.600 5.600 0 1 1 13.200 15" fill="none" stroke="#000" stroke-width="1.900"/><path d="M3.200 13.800l4.800 0.400l-2.600 3.800z M16.800 13.800l-4.800 0.400l2.600 3.800z" fill="#000"/></svg>
<svg width="20" height="20" viewBox="0 0 20 20" style="position:absolute;left:251px;top:364px;overflow:visible" ><path d="M4 9.500 Q3 6 5 5.500 L7.500 9 L6.500 3.500 Q8 2 9 3.500 L10.500 8 L10.500 3 Q12 1.800 13 3.500 L13.500 8.500 L14.500 5 Q16 4.500 16.500 6 Q17.500 12 15.500 15.500 Q13.500 18.500 10 17 Q6 15 4 9.500z" fill="#fff" stroke="#000" stroke-width="1.200" stroke-linejoin="round"/><path d="M5 11.500 Q8 11 9.500 13.500" fill="none" stroke="#000" stroke-width="1"/></svg>
<svg width="20" height="20" viewBox="0 0 20 20" style="position:absolute;left:273px;top:364px;overflow:visible" ><path d="M3 17.500l1-3l6.500-6.500l2 2l-6.500 6.500z" fill="#fff" stroke="#000" stroke-width="1"/><path d="M10 7l3.500 3.500" stroke="#000" stroke-width="2.400"/><path d="M11.500 8.500l3-4.500q2-2 3.500-0.500q1 1.500-1 3.500z" fill="#000" stroke="#000" stroke-width="1.200"/></svg>
<div style="left:332px;top:356px;width:26px;height:26px;background:#d9dbe7;border:1px solid #a8a8a8"></div>
<div style="left:316px;top:340px;width:24px;height:24px;background:#ff4500;border:2px solid #f6dcc4;outline:1px solid #9a9a9a;outline-offset:-1px"></div>
<div style="left:316px;top:340px;width:26px;height:26px;border:1px solid #999"></div>
<svg width="16" height="16" viewBox="0 0 16 16" style="position:absolute;left:346px;top:341px;overflow:visible" ><path d="M3 4.500 Q9 3 10.500 11" fill="none" stroke="#000" stroke-width="1.500"/><path d="M1 5l5-3.500v6z M10.500 14.500l-3-5h6z" fill="#000"/></svg>
<div style="left:315px;top:371px;width:13px;height:13px;border:1px solid #e4e4e4;border-radius:2px;background:#fafafa"></div>
<div style="left:318px;top:374px;width:4px;height:4px;background:#aaa"></div>
<div style="left:322px;top:378px;width:4px;height:4px;background:#aaa"></div>
<div style="left:322px;top:374px;width:4px;height:4px;background:#e8e8e8"></div>
<div style="left:318px;top:378px;width:4px;height:4px;background:#e8e8e8"></div>
<div style="left:183px;top:390px;width:177px;height:155px;border:1px solid #bcbcbc;border-radius:2px;background:#fff;overflow:hidden"></div>
<div style="left:184px;top:391px;width:161px;height:154px;overflow:hidden">
<div style="left:0;top:19px;width:161px;height:1px;background:#e6e6e6"></div>
<svg width="20" height="20" viewBox="0 0 20 20" style="position:absolute;left:20px;top:-1px"><path d="M7 13L15.200 4.800" stroke="#000" stroke-width="3.700" stroke-linecap="round"/><path d="M5.900 14.100L7.300 12.700" stroke="#000" stroke-width="4.300"/><path d="M2.600 17.400L5.300 14.700" stroke="#000" stroke-width="2.600"/><path d="M4.600 13.400l2 2" stroke="#fff" stroke-width="0.900"/></svg>
<div class="t" style="left:43px;top:1px;font-size:9.500px;letter-spacing:0.050px;line-height:12px">Brush</div>
<svg width="20" height="20" viewBox="0 0 20 20" style="position:absolute;left:60px;top:-1px"><path d="M2.500 17.500l1.500-4l9.500-9.500l2.500 2.500l-9.500 9.500z" fill="#ddd" stroke="#000" stroke-width="1"/><path d="M2.500 17.500l1.200-3l1.800 1.800z" fill="#000"/><path d="M2 8l16 7M4 15l13-9" stroke="#000" stroke-width="0.900"/></svg>
<div class="t" style="left:83px;top:1px;font-size:9.500px;letter-spacing:0.050px;line-height:12px">Pen</div>
<svg width="20" height="20" viewBox="0 0 20 20" style="position:absolute;left:100px;top:-1px"><path d="M2.500 17.500l1.500-4l9.500-9.500l2.500 2.500l-9.500 9.500z" fill="#ddd" stroke="#000" stroke-width="1"/><path d="M2.500 17.500l1.200-3l1.800 1.800z" fill="#000"/></svg>
<svg width="20" height="20" viewBox="0 0 20 20" style="position:absolute;left:140px;top:-1px"><path d="M7 13L15.200 4.800" stroke="#000" stroke-width="3.700" stroke-linecap="round"/><path d="M5.900 14.100L7.300 12.700" stroke="#000" stroke-width="4.300"/><path d="M2.600 17.400L5.300 14.700" stroke="#000" stroke-width="2.600"/><path d="M4.600 13.400l2 2" stroke="#fff" stroke-width="0.900"/></svg>
<div style="left:0;top:51px;width:161px;height:1px;background:#e6e6e6"></div>
<div class="t" style="left:3px;top:21px;font-size:9.500px;letter-spacing:0.050px;line-height:12px">Basic</div>
<div class="t" style="left:3px;top:33px;font-size:9.500px;letter-spacing:0.050px;line-height:12px">Brush</div>
<svg width="20" height="20" viewBox="0 0 20 20" style="position:absolute;left:20px;top:31px"><path d="M7 13L15.200 4.800" stroke="#000" stroke-width="3.700" stroke-linecap="round"/><path d="M5.900 14.100L7.300 12.700" stroke="#000" stroke-width="4.300"/><path d="M2.600 17.400L5.300 14.700" stroke="#000" stroke-width="2.600"/><path d="M4.600 13.400l2 2" stroke="#fff" stroke-width="0.900"/></svg>
<div class="t" style="left:43px;top:21px;font-size:9.500px;letter-spacing:0.050px;line-height:12px">Binary</div>
<div class="t" style="left:43px;top:33px;font-size:9.500px;letter-spacing:0.050px;line-height:12px">1/0</div>
<svg width="20" height="20" viewBox="0 0 20 20" style="position:absolute;left:60px;top:31px"><path d="M2.500 17.500l1.500-4l9.500-9.500l2.500 2.500l-9.500 9.500z" fill="#fff" stroke="#000" stroke-width="1"/><path d="M2.500 17.500l1.200-3l1.800 1.800z" fill="#000"/></svg>
<div class="t" style="left:83px;top:21px;font-size:9.500px;letter-spacing:0.050px;line-height:12px">Blend</div>
<svg width="20" height="20" viewBox="0 0 20 20" style="position:absolute;left:100px;top:31px"><path d="M7 13L15.200 4.800" stroke="#000" stroke-width="3.700" stroke-linecap="round"/><path d="M5.900 14.100L7.300 12.700" stroke="#000" stroke-width="4.300"/><path d="M2.600 17.400L5.300 14.700" stroke="#000" stroke-width="2.600"/><path d="M4.600 13.400l2 2" stroke="#fff" stroke-width="0.900"/><path d="M15 10.500q3 4.500 3 6a3 3 0 0 1-6 0q0-1.500 3-6z" fill="#bbb" stroke="#666" stroke-width="0.800"/></svg>
<div class="t" style="left:123px;top:21px;font-size:9.500px;letter-spacing:0.050px;line-height:12px">Blur</div>
<svg width="20" height="20" viewBox="0 0 20 20" style="position:absolute;left:140px;top:31px"><path d="M7 13L15.200 4.800" stroke="#000" stroke-width="3.700" stroke-linecap="round"/><path d="M5.900 14.100L7.300 12.700" stroke="#000" stroke-width="4.300"/><path d="M2.600 17.400L5.300 14.700" stroke="#000" stroke-width="2.600"/><path d="M4.600 13.400l2 2" stroke="#fff" stroke-width="0.900"/><path d="M15 10.500q3 4.500 3 6a3 3 0 0 1-6 0q0-1.500 3-6z" fill="#bbb" stroke="#666" stroke-width="0.800"/></svg>
<div style="left:0;top:83px;width:161px;height:1px;background:#e6e6e6"></div>
<div class="t" style="left:3px;top:53px;font-size:9.500px;letter-spacing:0.050px;line-height:12px">Bucket</div>
<svg width="20" height="20" viewBox="0 0 20 20" style="position:absolute;left:20px;top:63px"><path d="M6 9l7-5l5 8l-7 5z" fill="#e8e8e8" stroke="#000" stroke-width="1"/><path d="M13 4q3-1.500 3.500 2" fill="none" stroke="#000" stroke-width="1"/><path d="M6 9q-3.500 2-3.500 8.500h4.500q-1.500-4 1-6.500z" fill="#999" stroke="#333" stroke-width="0.800"/><path d="M1 18.500h8" stroke="#555" stroke-width="1.200"/></svg>
<div class="t" style="left:43px;top:53px;font-size:9.500px;letter-spacing:0.050px;line-height:12px">Copic</div>
<svg width="20" height="20" viewBox="0 0 20 20" style="position:absolute;left:60px;top:63px"><path d="M7 13L15.200 4.800" stroke="#000" stroke-width="3.700" stroke-linecap="round"/><path d="M5.900 14.100L7.300 12.700" stroke="#000" stroke-width="4.300"/><path d="M2.600 17.400L5.300 14.700" stroke="#000" stroke-width="2.600"/><path d="M4.600 13.400l2 2" stroke="#fff" stroke-width="0.900"/><path d="M15 10.500q3 4.500 3 6a3 3 0 0 1-6 0q0-1.500 3-6z" fill="#bbb" stroke="#666" stroke-width="0.800"/></svg>
<div class="t" style="left:83px;top:53px;font-size:9.500px;letter-spacing:0.050px;line-height:12px">Crayon</div>
<svg width="20" height="20" viewBox="0 0 20 20" style="position:absolute;left:100px;top:63px"><path d="M2.500 17.500l1.500-4l9.500-9.500l2.500 2.500l-9.500 9.500z" fill="#e8e8e8" stroke="#000" stroke-width="1"/><path d="M2.500 17.500l1.200-3l1.800 1.800z" fill="#000"/></svg>
<div class="t" style="left:123px;top:53px;font-size:9.500px;letter-spacing:0.050px;line-height:12px">Canvas</div>
<div class="t" style="left:123px;top:65px;font-size:9.500px;letter-spacing:0.050px;line-height:12px">Acryl</div>
<svg width="20" height="20" viewBox="0 0 20 20" style="position:absolute;left:140px;top:63px"><path d="M7 13L15.200 4.800" stroke="#000" stroke-width="3.700" stroke-linecap="round"/><path d="M5.900 14.100L7.300 12.700" stroke="#000" stroke-width="4.300"/><path d="M2.600 17.400L5.300 14.700" stroke="#000" stroke-width="2.600"/><path d="M4.600 13.400l2 2" stroke="#fff" stroke-width="0.900"/></svg>
<div style="left:0;top:115px;width:161px;height:1px;background:#e6e6e6"></div>
<div class="t" style="left:3px;top:85px;font-size:9.500px;letter-spacing:0.050px;line-height:12px">Details</div>
<svg width="20" height="20" viewBox="0 0 20 20" style="position:absolute;left:20px;top:95px"><path d="M7 13L15.200 4.800" stroke="#000" stroke-width="3.700" stroke-linecap="round"/><path d="M5.900 14.100L7.300 12.700" stroke="#000" stroke-width="4.300"/><path d="M2.600 17.400L5.300 14.700" stroke="#000" stroke-width="2.600"/><path d="M4.600 13.400l2 2" stroke="#fff" stroke-width="0.900"/></svg>
<div class="t" style="left:43px;top:85px;font-size:9.500px;letter-spacing:0.050px;line-height:12px">Eraser</div>
<svg width="20" height="20" viewBox="0 0 20 20" style="position:absolute;left:60px;top:95px"><g transform="rotate(-40 10 11)"><rect x="2.500" y="6.500" width="15" height="9" rx="1.800" fill="#f4f4f4" stroke="#333" stroke-width="1"/><path d="M9 6.500h6.700a1.800 1.800 0 0 1 1.800 1.800v5.400a1.800 1.800 0 0 1-1.800 1.800h-6.700z" fill="#777" stroke="#333" stroke-width="1"/><path d="M3 15.500h14" stroke="#999" stroke-width="1.200"/></g></svg>
<div class="t" style="left:83px;top:85px;font-size:9.500px;letter-spacing:0.050px;line-height:12px">Fino</div>
<div class="t" style="left:83px;top:97px;font-size:9.500px;letter-spacing:0.050px;line-height:12px">Graf</div>
<svg width="20" height="20" viewBox="0 0 20 20" style="position:absolute;left:100px;top:95px"><path d="M7 13L15.200 4.800" stroke="#000" stroke-width="3.700" stroke-linecap="round"/><path d="M5.900 14.100L7.300 12.700" stroke="#000" stroke-width="4.300"/><path d="M2.600 17.400L5.300 14.700" stroke="#000" stroke-width="2.600"/><path d="M4.600 13.400l2 2" stroke="#fff" stroke-width="0.900"/></svg>
<div class="t" style="left:123px;top:85px;font-size:9.500px;letter-spacing:0.050px;line-height:12px">Graf</div>
<svg width="20" height="20" viewBox="0 0 20 20" style="position:absolute;left:140px;top:95px"><path d="M7 13L15.200 4.800" stroke="#000" stroke-width="3.700" stroke-linecap="round"/><path d="M5.900 14.100L7.300 12.700" stroke="#000" stroke-width="4.300"/><path d="M2.600 17.400L5.300 14.700" stroke="#000" stroke-width="2.600"/><path d="M4.600 13.400l2 2" stroke="#fff" stroke-width="0.900"/></svg>
<div style="left:0;top:147px;width:161px;height:1px;background:#e6e6e6"></div>
<div class="t" style="left:3px;top:117px;font-size:9.500px;letter-spacing:0.050px;line-height:12px">Goma</div>
<div class="t" style="left:3px;top:129px;font-size:9.500px;letter-spacing:0.050px;line-height:12px">Graf</div>
<svg width="20" height="20" viewBox="0 0 20 20" style="position:absolute;left:20px;top:127px"><g transform="rotate(-40 10 11)"><rect x="2.500" y="6.500" width="15" height="9" rx="1.800" fill="#f4f4f4" stroke="#333" stroke-width="1"/><path d="M9 6.500h6.700a1.800 1.800 0 0 1 1.800 1.800v5.400a1.800 1.800 0 0 1-1.800 1.800h-6.700z" fill="#777" stroke="#333" stroke-width="1"/><path d="M3 15.500h14" stroke="#999" stroke-width="1.200"/></g></svg>
<div style="left:40px;top:116px;width:38px;height:30px;background:#dcdcff;border:1px solid #7a76c8"></div>
<div class="t" style="left:43px;top:117px;font-size:9.500px;letter-spacing:0.050px;line-height:12px">Ink</div>
<svg width="20" height="20" viewBox="0 0 20 20" style="position:absolute;left:60px;top:127px"><path d="M2.500 17.500l1.500-4l9.500-9.500l2.500 2.500l-9.500 9.500z" fill="#bbb" stroke="#000" stroke-width="1"/><path d="M2.500 17.500l1.200-3l1.800 1.800z" fill="#000"/></svg>
<div class="t" style="left:83px;top:117px;font-size:9.500px;letter-spacing:0.050px;line-height:12px">Lapiz</div>
<div class="t" style="left:83px;top:129px;font-size:9.500px;letter-spacing:0.050px;line-height:12px">Graf</div>
<svg width="20" height="20" viewBox="0 0 20 20" style="position:absolute;left:100px;top:127px"><path d="M7 13L15.200 4.800" stroke="#000" stroke-width="3.700" stroke-linecap="round"/><path d="M5.900 14.100L7.300 12.700" stroke="#000" stroke-width="4.300"/><path d="M2.600 17.400L5.300 14.700" stroke="#000" stroke-width="2.600"/><path d="M4.600 13.400l2 2" stroke="#fff" stroke-width="0.900"/></svg>
<div class="t" style="left:123px;top:117px;font-size:9.500px;letter-spacing:0.050px;line-height:12px">Legacy</div>
<div class="t" style="left:123px;top:129px;font-size:9.500px;letter-spacing:0.050px;line-height:12px">Pen</div>
<svg width="20" height="20" viewBox="0 0 20 20" style="position:absolute;left:140px;top:127px"><path d="M2.500 17.500l1.500-4l9.500-9.500l2.500 2.500l-9.500 9.500z" fill="#fff" stroke="#000" stroke-width="1"/><path d="M2.500 17.500l1.200-3l1.800 1.800z" fill="#000"/></svg>
<div style="left:0;top:179px;width:161px;height:1px;background:#e6e6e6"></div>
<div class="t" style="left:3px;top:149px;font-size:9.500px;letter-spacing:0.050px;line-height:12px">Marker</div>
<div class="t" style="left:43px;top:149px;font-size:9.500px;letter-spacing:0.050px;line-height:12px">Nib</div>
<div class="t" style="left:83px;top:149px;font-size:9.500px;letter-spacing:0.050px;line-height:12px">Oils</div>
<div class="t" style="left:123px;top:149px;font-size:9.500px;letter-spacing:0.050px;line-height:12px">Pen</div>
<div style="left:40px;top:0;width:1px;height:154px;background:#e6e6e6"></div>
<div style="left:80px;top:0;width:1px;height:154px;background:#e6e6e6"></div>
<div style="left:120px;top:0;width:1px;height:154px;background:#e6e6e6"></div>
<div style="left:160px;top:0;width:1px;height:154px;background:#e6e6e6"></div>
</div>
<div style="left:345px;top:391px;width:15px;height:154px;background:#efefef"></div>
<div class="b" style="left:345px;top:392px;width:11px;height:11px"><svg width="11" height="11" style="position:absolute;left:0;top:0"><path d="M2 7h7l-3.500-4z" fill="#fff"/></svg></div>
<div class="b" style="left:345px;top:529px;width:11px;height:11px"><svg width="11" height="11" style="position:absolute;left:0;top:0"><path d="M2 4h7l-3.500 4z" fill="#fff"/></svg></div>
<div style="left:345px;top:412px;width:11px;height:24px;background:#a9a9a9;border:2px solid #575757;border-radius:2px"></div>
<div style="left:264px;top:550px;width:16px;height:3px;background:#8c8c8c;border-radius:2px"></div>
<div style="left:183px;top:551px;width:78px;height:1px;background:#e8e8e8"></div>
<div style="left:284px;top:551px;width:77px;height:1px;background:#e8e8e8"></div>
<div class="cb" style="left:183px;top:556px;width:97px;height:17px"><span style="left:5px">Норма</span></div>
<div class="b" style="left:265px;top:558px;width:11px;height:11px"><svg width="11" height="11" style="position:absolute;left:0;top:0"><path d="M2.0 4.0h7l-3.5 4z" fill="#fff"/></svg></div>
<div style="left:286px;top:556px;width:73px;height:17px;border:1px solid #c8c8c8;border-radius:2px;background:#fff"></div>
<svg width="73" height="17" viewBox="0 0 73 17" style="position:absolute;left:287px;top:557px;overflow:visible" ><path d="M2 13.500h14q-3-0.500-4.500-4.500q-1.200-3.500-2.500-3.500q-1.300 0-2.500 3.500q-1.500 4-4.500 4.500z" fill="#000"/><path d="M20 13.500h14q-1.800-1-2.600-4.200q-0.800-3.800-4.400-3.800q-3.600 0-4.400 3.800q-0.800 3.200-2.600 4.200z" fill="#000"/><path d="M38 13.500h14q-1.200-1-1.500-3.500q-0.300-4.500-5.500-4.500q-5.200 0-5.500 4.500q-0.300 2.500-1.500 3.500z" fill="#000"/></svg>
<div style="left:342px;top:557px;width:15px;height:13px;background:#e4e0ff;border:1px solid #6c66c4"></div>
<div style="left:345px;top:561px;width:11px;height:8px;background:#000"></div>
<div class="t" style="left:182px;top:584px;">Размер</div>
<div class="b" style="left:242px;top:582px;width:9px;height:9px"><svg width="9" height="9" style="position:absolute;left:0;top:0"><path d="M1.0 3.0h7l-3.5 4z" fill="#fff"/></svg></div>
<div class="sl" style="left:257px;top:582px;width:102px;height:12px"><i style="width:100px"></i><span class="l">x 0.1</span><span class="r">250.0</span></div>
<div class="t" style="left:182px;top:602px;">Мин. размер</div>
<div class="sl" style="left:257px;top:600px;width:82px;height:12px"><i style="width:80px"></i><span class="l"></span><span class="r">100%</span></div>
<div class="t" style="left:182px;top:624px;">Плотность</div>
<div class="sl" style="left:257px;top:622px;width:102px;height:12px"><i style="width:100px"></i><span class="l"></span><span class="r">100</span></div>
<div class="cb" style="left:183px;top:644px;width:118px;height:16px"><span style="left:5px">(Простой круг)</span></div>
<div class="b" style="left:286px;top:645px;width:11px;height:11px"><svg width="11" height="11" style="position:absolute;left:0;top:0"><path d="M2.0 4.0h7l-3.5 4z" fill="#fff"/></svg></div>
<div style="left:307px;top:644px;width:52px;height:14px;border:1px solid #e2e2e2;border-radius:2px;background:#f4f4f4"></div>
<div class="t" style="left:311px;top:645px;color:#c4c4c4;font-size:10px">Пл-ть 100</div>
<div class="cb" style="left:183px;top:666px;width:118px;height:16px"><span style="left:5px">(Без текстуры)</span></div>
<div class="b" style="left:286px;top:667px;width:11px;height:11px"><svg width="11" height="11" style="position:absolute;left:0;top:0"><path d="M2.0 4.0h7l-3.5 4z" fill="#fff"/></svg></div>
<div style="left:307px;top:666px;width:52px;height:14px;border:1px solid #e2e2e2;border-radius:2px;background:#f4f4f4"></div>
<div class="t" style="left:311px;top:667px;color:#c4c4c4;font-size:10px">Текс.</div>
<div class="t" style="right:1563px;top:667px;color:#c4c4c4;font-size:10px">100</div>
<div style="left:183px;top:692px;width:13px;height:12px;background:#6e6e6e;border-radius:2px"></div>
<div style="left:185px;top:696px;width:9px;height:4px;background:#fff"></div>
<div class="t" style="left:199px;top:692px;">Дополнительно</div>
<div class="t" style="left:182px;top:713px;">Качество</div>
<div class="cb" style="left:257px;top:708px;width:102px;height:17px"><span style="left:5px">4 (Лучше)</span></div>
<div class="b" style="left:344px;top:710px;width:11px;height:11px"><svg width="11" height="11" style="position:absolute;left:0;top:0"><path d="M2.0 4.0h7l-3.5 4z" fill="#fff"/></svg></div>
<div class="t" style="left:182px;top:733px;">Жесткость</div>
<div class="sl" style="left:257px;top:731px;width:102px;height:12px"><i style="width:0px"></i><span class="l"></span><span class="r">0</span></div>
<div class="t" style="left:182px;top:751px;">Мин. плотн.</div>
<div class="sl" style="left:257px;top:749px;width:102px;height:12px"><i style="width:0px"></i><span class="l"></span><span class="r">0</span></div>
<div class="t" style="left:182px;top:769px;">Макс. дав-ние</div>
<div class="sl" style="left:257px;top:767px;width:102px;height:12px"><i style="width:100px"></i><span class="l"></span><span class="r">100%</span></div>
<div class="t" style="left:182px;top:787px;">Жестко-Мягко</div>
<div class="sl" style="left:257px;top:785px;width:102px;height:12px"><i style="width:50px"></i><span class="l"></span><span class="r">100</span></div>
<div class="t" style="left:182px;top:803px;">Давл.:</div>
<div style="left:220px;top:803px;width:10px;height:10px;border:1px solid #808080;border-radius:2px;background:#fff"><svg width="12" height="12" style="position:absolute;left:-1px;top:-1px"><path d="M2.2 5.3 L4.6 8 L9 2.8" fill="none" stroke="#000" stroke-width="2"/></svg></div>
<div class="t" style="left:234px;top:803px;">Пл-ть</div>
<div style="left:268px;top:803px;width:10px;height:10px;border:1px solid #808080;border-radius:2px;background:#fff"><svg width="12" height="12" style="position:absolute;left:-1px;top:-1px"><path d="M2.2 5.3 L4.6 8 L9 2.8" fill="none" stroke="#000" stroke-width="2"/></svg></div>
<div class="t" style="left:283px;top:803px;">Разм.</div>
<div style="left:315px;top:803px;width:10px;height:10px;border:1px solid #d0d0d0;border-radius:2px;background:#fff"></div>
<div class="t" style="left:330px;top:803px;color:#c4c4c4">Цвет</div>
<div style="left:183px;top:820px;width:177px;height:186px;border:1px solid #bcbcbc;border-radius:2px;background:#e0e0e0"></div>
<div style="left:185px;top:822px;width:31px;height:31px;background:#fff"></div>
<div style="left:196.5px;top:828.5px;width:8px;height:8px;background:#000;border-radius:50%"></div>
<div class="t" style="left:185px;top:842px;width:31px;text-align:center;font-size:9px;line-height:11px">10</div>
<div style="left:217px;top:822px;width:31px;height:31px;background:#fff"></div>
<div style="left:227.3px;top:827.3px;width:10.4px;height:10.4px;background:#000;border-radius:50%"></div>
<div class="t" style="left:217px;top:842px;width:31px;text-align:center;font-size:9px;line-height:11px">12</div>
<div style="left:249px;top:822px;width:31px;height:31px;background:#fff"></div>
<div style="left:258.3px;top:826.3px;width:12.4px;height:12.4px;background:#000;border-radius:50%"></div>
<div class="t" style="left:249px;top:842px;width:31px;text-align:center;font-size:9px;line-height:11px">14</div>
<div style="left:281px;top:822px;width:31px;height:31px;background:#fff"></div>
<div style="left:289.3px;top:825.3px;width:14.4px;height:14.4px;background:#000;border-radius:50%"></div>
<div class="t" style="left:281px;top:842px;width:31px;text-align:center;font-size:9px;line-height:11px">16</div>
<div style="left:313px;top:822px;width:31px;height:31px;background:#fff"></div>
<div style="left:319.3px;top:823.3px;width:18.4px;height:18.4px;background:#000;border-radius:50%"></div>
<div class="t" style="left:313px;top:842px;width:31px;text-align:center;font-size:9px;line-height:11px">20</div>
<div style="left:185px;top:854px;width:31px;height:31px;background:#fff"></div>
<div style="left:191.0px;top:856.0px;width:19.0px;height:19.0px;background:#000;border-radius:50%"></div>
<div class="t" style="left:185px;top:874px;width:31px;text-align:center;font-size:9px;line-height:11px">25</div>
<div style="left:217px;top:854px;width:31px;height:31px;background:#fff"></div>
<div style="left:223.0px;top:856.0px;width:19.0px;height:19.0px;background:#000;border-radius:50%"></div>
<div class="t" style="left:217px;top:874px;width:31px;text-align:center;font-size:9px;line-height:11px">30</div>
<div style="left:249px;top:854px;width:31px;height:31px;background:#fff"></div>
<div style="left:255.0px;top:856.0px;width:19.0px;height:19.0px;background:#000;border-radius:50%"></div>
<div class="t" style="left:249px;top:874px;width:31px;text-align:center;font-size:9px;line-height:11px">35</div>
<div style="left:281px;top:854px;width:31px;height:31px;background:#fff"></div>
<div style="left:287.0px;top:856.0px;width:19.0px;height:19.0px;background:#000;border-radius:50%"></div>
<div class="t" style="left:281px;top:874px;width:31px;text-align:center;font-size:9px;line-height:11px">40</div>
<div style="left:313px;top:854px;width:31px;height:31px;background:#fff"></div>
<div style="left:319.0px;top:856.0px;width:19.0px;height:19.0px;background:#000;border-radius:50%"></div>
<div class="t" style="left:313px;top:874px;width:31px;text-align:center;font-size:9px;line-height:11px">50</div>
<div style="left:185px;top:886px;width:31px;height:31px;background:#fff"></div>
<div style="left:191.0px;top:888.0px;width:19.0px;height:19.0px;background:#000;border-radius:50%"></div>
<div class="t" style="left:185px;top:906px;width:31px;text-align:center;font-size:9px;line-height:11px">60</div>
<div style="left:217px;top:886px;width:31px;height:31px;background:#fff"></div>
<div style="left:223.0px;top:888.0px;width:19.0px;height:19.0px;background:#000;border-radius:50%"></div>
<div class="t" style="left:217px;top:906px;width:31px;text-align:center;font-size:9px;line-height:11px">70</div>
<div style="left:249px;top:886px;width:31px;height:31px;background:#fff"></div>
<div style="left:255.0px;top:888.0px;width:19.0px;height:19.0px;background:#000;border-radius:50%"></div>
<div class="t" style="left:249px;top:906px;width:31px;text-align:center;font-size:9px;line-height:11px">80</div>
<div style="left:281px;top:886px;width:31px;height:31px;background:#fff"></div>
<div style="left:287.0px;top:888.0px;width:19.0px;height:19.0px;background:#000;border-radius:50%"></div>
<div class="t" style="left:281px;top:906px;width:31px;text-align:center;font-size:9px;line-height:11px">100</div>
<div style="left:313px;top:886px;width:31px;height:31px;background:#fff"></div>
<div style="left:319.0px;top:888.0px;width:19.0px;height:19.0px;background:#000;border-radius:50%"></div>
<div class="t" style="left:313px;top:906px;width:31px;text-align:center;font-size:9px;line-height:11px">120</div>
<div style="left:185px;top:918px;width:31px;height:31px;background:#fff"></div>
<div style="left:191.0px;top:920.0px;width:19.0px;height:19.0px;background:#000;border-radius:50%"></div>
<div class="t" style="left:185px;top:938px;width:31px;text-align:center;font-size:9px;line-height:11px">160</div>
<div style="left:217px;top:918px;width:31px;height:31px;background:#fff"></div>
<div style="left:223.0px;top:920.0px;width:19.0px;height:19.0px;background:#000;border-radius:50%"></div>
<div class="t" style="left:217px;top:938px;width:31px;text-align:center;font-size:9px;line-height:11px">200</div>
<div style="left:249px;top:917px;width:30px;height:30px;background:#dcdcff;border:1px solid #7a76c8"></div>
<div style="left:255.0px;top:920.0px;width:19.0px;height:19.0px;background:#000;border-radius:50%"></div>
<div class="t" style="left:249px;top:938px;width:31px;text-align:center;font-size:9px;line-height:11px">250</div>
<div style="left:281px;top:918px;width:31px;height:31px;background:#fff"></div>
<div style="left:287.0px;top:920.0px;width:19.0px;height:19.0px;background:#000;border-radius:50%"></div>
<div class="t" style="left:281px;top:938px;width:31px;text-align:center;font-size:9px;line-height:11px">300</div>
<div style="left:313px;top:918px;width:31px;height:31px;background:#fff"></div>
<div style="left:319.0px;top:920.0px;width:19.0px;height:19.0px;background:#000;border-radius:50%"></div>
<div class="t" style="left:313px;top:938px;width:31px;text-align:center;font-size:9px;line-height:11px">350</div>
<div style="left:185px;top:950px;width:31px;height:31px;background:#fff"></div>
<div style="left:191.0px;top:952.0px;width:19.0px;height:19.0px;background:#000;border-radius:50%"></div>
<div class="t" style="left:185px;top:970px;width:31px;text-align:center;font-size:9px;line-height:11px">400</div>
<div style="left:217px;top:950px;width:31px;height:31px;background:#fff"></div>
<div style="left:223.0px;top:952.0px;width:19.0px;height:19.0px;background:#000;border-radius:50%"></div>
<div class="t" style="left:217px;top:970px;width:31px;text-align:center;font-size:9px;line-height:11px">450</div>
<div style="left:249px;top:950px;width:31px;height:31px;background:#fff"></div>
<div style="left:255.0px;top:952.0px;width:19.0px;height:19.0px;background:#000;border-radius:50%"></div>
<div class="t" style="left:249px;top:970px;width:31px;text-align:center;font-size:9px;line-height:11px">500</div>
<div style="left:345px;top:822px;width:15px;height:184px;background:#efefef"></div>
<div class="b" style="left:345px;top:823px;width:11px;height:11px"><svg width="11" height="11" style="position:absolute;left:0;top:0"><path d="M2 7h7l-3.500-4z" fill="#fff"/></svg></div>
<div class="b" style="left:345px;top:991px;width:11px;height:11px"><svg width="11" height="11" style="position:absolute;left:0;top:0"><path d="M2 4h7l-3.500 4z" fill="#fff"/></svg></div>
<div style="left:345px;top:897px;width:11px;height:87px;background:#a9a9a9;border:2px solid #575757;border-radius:2px"></div>
<div style="left:363px;top:47px;width:1px;height:963px;background:#f4f4f4"></div>
<div class="b" style="left:366px;top:50px;width:17px;height:15px"><svg width="17" height="15" viewBox="0 0 17 15" style="position:absolute;left:0;top:0"><path d="M5.500 7A4 4 0 1 1 9.500 11" fill="none" stroke="#fff" stroke-width="2.400"/><path d="M2 2.500l6.500 3l-6 4.500z" fill="#fff"/><rect x="3" y="12.300" width="10.500" height="1.700" fill="#fff"/></svg></div>
<div class="bd" style="left:389px;top:50px;width:17px;height:15px"><svg width="17" height="15" viewBox="0 0 17 15" style="position:absolute;left:0;top:0"><path d="M11.500 7A4 4 0 1 0 7.500 11" fill="none" stroke="#fff" stroke-width="2.400"/><path d="M15 2.500l-6.500 3l6 4.500z" fill="#fff"/><rect x="3.500" y="12.300" width="10.500" height="1.700" fill="#fff"/></svg></div>
<div class="bd" style="left:418px;top:50px;width:17px;height:15px"><svg width="17" height="15" viewBox="0 0 17 15" style="position:absolute;left:0;top:0"><rect x="2" y="2" width="12" height="11" fill="none" stroke="#fff" stroke-dasharray="2 1.500"/><path d="M4 11l7-7" stroke="#fff" stroke-width="1.500"/></svg></div>
<div class="bd" style="left:441px;top:50px;width:17px;height:15px"><svg width="17" height="15" viewBox="0 0 17 15" style="position:absolute;left:0;top:0"><rect x="2" y="2" width="12" height="11" fill="none" stroke="#fff" stroke-dasharray="2 1.500"/><path d="M3 7.500h10" stroke="#fff" stroke-width="1.500"/></svg></div>
<div style="left:468px;top:55px;width:10px;height:10px;border:1px solid #808080;border-radius:2px;background:#fff"><svg width="12" height="12" style="position:absolute;left:-1px;top:-1px"><path d="M2.2 5.3 L4.6 8 L9 2.8" fill="none" stroke="#000" stroke-width="2"/></svg></div>
<div class="t" style="left:482px;top:55px;">Выбранное</div>
<div class="cb" style="left:549px;top:51px;width:67px;height:16px"><span style="left:6px">33.33%</span></div>
<div class="b" style="left:601px;top:52px;width:11px;height:11px"><svg width="11" height="11" style="position:absolute;left:0;top:0"><path d="M2.0 4.0h7l-3.5 4z" fill="#fff"/></svg></div>
<div class="b" style="left:622px;top:51px;width:15px;height:14px"><svg width="15" height="15" style="position:absolute;left:0;top:-0.500px"><rect x="2.5" y="6" width="10" height="3" fill="#fff"/></svg></div>
<div class="b" style="left:643px;top:51px;width:15px;height:14px"><svg width="15" height="15" style="position:absolute;left:0;top:-0.500px"><rect x="2.5" y="6" width="10" height="3" fill="#fff"/><rect x="6" y="2.5" width="3" height="10" fill="#fff"/></svg></div>
<div class="b" style="left:664px;top:51px;width:15px;height:14px"><svg width="15" height="15" style="position:absolute;left:0;top:-0.500px"><rect x="4" y="4" width="7" height="7" fill="#fff"/></svg></div>
<div class="cb" style="left:691px;top:51px;width:62px;height:16px"><span style="left:6px">+000°</span></div>
<div class="b" style="left:738px;top:52px;width:11px;height:11px"><svg width="11" height="11" style="position:absolute;left:0;top:0"><path d="M2.0 4.0h7l-3.5 4z" fill="#fff"/></svg></div>
<div class="b" style="left:758px;top:51px;width:15px;height:14px"><svg width="15" height="15" style="position:absolute;left:0;top:-0.500px"><path d="M3.500 7.500A4 4 0 1 1 5.800 11.200" fill="none" stroke="#fff" stroke-width="2.200"/><path d="M0.600 6.400h5.800l-2.900 3.800z" fill="#fff"/></svg></div>
<div class="b" style="left:779px;top:51px;width:15px;height:14px"><svg width="15" height="15" style="position:absolute;left:0;top:-0.500px"><path d="M11.500 7.500A4 4 0 1 0 9.200 11.200" fill="none" stroke="#fff" stroke-width="2.200"/><path d="M14.400 6.400h-5.800l2.900 3.800z" fill="#fff"/></svg></div>
<div class="b" style="left:800px;top:51px;width:15px;height:14px"><svg width="15" height="15" style="position:absolute;left:0;top:-0.500px"><rect x="4" y="4" width="7" height="7" fill="#fff"/></svg></div>
<div style="left:827px;top:51px;width:37px;height:16px;border:1px solid #c8c8c8;border-radius:2px;background:#fff"></div>
<div class="t" style="left:838px;top:53px;">-&gt;</div>
<div class="b" style="left:869px;top:51px;width:17px;height:14px"><svg width="17" height="14" style="position:absolute;left:0;top:0"><path d="M3 4.500h9M5 9.500h9" stroke="#fff" stroke-width="2"/><path d="M11 1.500l4 3l-4 3zM6 6.500l-4 3l4 3z" fill="#fff"/></svg></div>
<div class="t" style="left:897px;top:55px;">Сглаживание</div>
<div class="cb" style="left:969px;top:51px;width:47px;height:16px"><span style="left:7px">15</span></div>
<div class="b" style="left:1001px;top:52px;width:11px;height:11px"><svg width="11" height="11" style="position:absolute;left:0;top:0"><path d="M2.0 4.0h7l-3.5 4z" fill="#fff"/></svg></div>
<div style="left:366px;top:71px;width:1549px;height:911px;border:1px solid #e8d4b8;border-radius:2px;background:#f7eee2"></div>
<div style="left:368px;top:73px;width:1531px;height:893px;background:#b0b0b0"></div>
<div style="left:801px;top:187px;width:666px;height:666px;background:#fff"></div>
<svg width="666" height="666" viewBox="0 0 666 666" style="position:absolute;left:801px;top:187px">
<defs><filter id="bl" x="-5%" y="-5%" width="110%" height="110%"><feGaussianBlur stdDeviation="1.500"/></filter>
<linearGradient id="fd" gradientUnits="userSpaceOnUse" x1="234" y1="68" x2="209" y2="122"><stop offset="0" stop-color="#fff" stop-opacity="1"/><stop offset="0.100" stop-color="#fff" stop-opacity="0.850"/><stop offset="0.250" stop-color="#fff" stop-opacity="0.450"/><stop offset="0.400" stop-color="#fff" stop-opacity="0.200"/><stop offset="0.600" stop-color="#fff" stop-opacity="0.100"/><stop offset="1" stop-color="#fff" stop-opacity="0"/></linearGradient></defs>
<path d="M80.0 357.0C80.5 353.7 81.2 344.0 83.0 337.0C84.8 330.0 87.8 322.3 91.0 315.0C94.2 307.7 98.2 300.7 102.0 293.0C105.8 285.3 109.7 278.3 114.0 269.0C118.3 259.7 123.3 247.7 128.0 237.0C132.7 226.3 137.3 215.7 142.0 205.0C146.7 194.3 152.2 181.7 156.0 173.0C159.8 164.3 162.4 158.7 165.0 153.0C167.6 147.3 168.3 145.7 171.5 139.0C174.7 132.3 179.8 120.7 184.0 113.0C188.2 105.3 192.3 98.4 196.5 93.0C200.7 87.6 204.8 83.7 209.0 80.5C213.2 77.3 217.3 75.2 221.5 74.0C225.7 72.8 229.9 72.6 234.0 73.0C238.1 73.4 242.5 76.3 246.0 76.5C249.5 76.7 251.8 75.6 255.0 74.0C258.2 72.4 260.2 70.1 265.0 66.8C269.8 63.5 278.8 56.8 284.0 54.0C289.2 51.2 292.3 50.9 296.5 50.0C300.7 49.1 304.8 48.3 309.0 48.6C313.2 48.9 317.3 50.1 321.5 51.8C325.7 53.5 330.2 55.7 334.0 59.0C337.8 62.3 341.5 67.4 344.0 71.8C346.5 76.2 348.1 81.1 349.0 85.5C349.9 89.9 349.8 94.5 349.6 98.0C349.4 101.5 348.1 105.3 347.8 106.8C349.7 106.0 355.1 103.1 359.0 101.8C362.9 100.5 367.3 99.2 371.5 99.0C375.7 98.8 379.8 99.4 384.0 100.5C388.2 101.6 392.3 102.6 396.5 105.5C400.7 108.4 405.9 113.4 409.0 118.0C412.1 122.6 413.8 128.7 415.0 133.0C416.2 137.3 415.3 141.3 416.0 144.0C416.7 146.7 418.5 148.2 419.0 149.0C421.5 149.7 429.4 150.7 434.0 153.0C438.6 155.3 443.3 159.2 446.5 163.0C449.7 166.8 451.3 172.2 453.0 175.5C454.7 178.8 455.9 181.8 456.5 183.0C458.6 184.2 465.2 187.2 469.0 190.5C472.8 193.8 475.7 198.4 479.0 203.0C482.3 207.6 486.7 213.0 489.0 218.0C491.3 223.0 492.6 228.0 493.0 233.0C493.4 238.0 492.6 243.0 491.5 248.0C490.4 253.0 487.9 258.8 486.5 263.0C485.1 267.2 483.6 271.3 483.0 273.0C483.2 274.7 484.2 278.8 484.0 283.0C483.8 287.2 482.8 293.0 481.5 298.0C480.2 303.0 478.2 307.9 476.0 313.0C473.8 318.1 470.6 323.8 468.0 328.5C465.4 333.2 462.6 336.3 460.4 341.5C458.2 346.7 457.6 351.9 455.0 359.6C452.4 367.4 448.6 378.1 444.8 388.0C441.0 397.9 436.3 408.7 432.0 419.0C427.7 429.3 422.9 441.3 419.0 450.0C415.1 458.7 412.5 464.9 408.6 471.0C404.7 477.1 400.8 481.4 395.6 486.6C390.4 491.8 384.0 497.3 377.5 502.0C371.0 506.7 363.2 511.3 356.7 515.0C350.2 518.7 344.2 522.0 338.6 524.0C333.0 526.0 326.7 526.1 323.0 526.8C319.3 527.5 317.7 527.8 316.6 528.0C315.9 530.2 315.1 535.8 312.7 541.0C310.3 546.2 306.2 554.2 302.3 559.0C298.4 563.8 293.3 567.1 289.4 569.5C285.5 571.9 283.3 572.6 279.0 573.4C274.7 574.1 270.2 573.3 263.4 574.0C256.6 574.7 246.3 577.5 238.4 577.7C230.5 577.9 223.4 576.9 216.0 575.0C208.6 573.1 200.9 570.6 194.0 566.6C187.1 562.6 180.0 556.6 174.5 551.3C169.0 546.0 164.0 540.2 160.7 534.7C157.5 529.2 156.0 520.8 155.0 518.0C152.7 516.2 144.7 511.7 141.0 507.0C137.3 502.3 134.6 496.0 133.0 490.0C131.4 484.0 130.8 477.0 131.5 470.8C132.2 464.6 136.1 455.7 137.0 452.7C134.9 452.0 128.9 451.1 124.5 448.5C120.1 445.9 114.4 441.6 110.7 437.4C107.0 433.2 103.9 429.1 102.3 423.5C100.7 417.9 100.3 409.8 101.0 404.0C101.7 398.2 105.6 391.3 106.5 388.8C104.9 388.1 100.3 387.3 96.8 384.7C93.3 382.2 88.5 378.1 85.7 373.5C82.9 368.9 81.0 359.8 80.0 357.0Z" fill="#ff4500" filter="url(#bl)"/>
<path d="M269 58L247.900 85L231 106L214.500 125L194 153L149 158L149 53z" fill="url(#fd)" filter="url(#bl)"/>
<path d="M323.0 283.0C321.8 280.2 318.3 271.6 316.0 266.0C313.7 260.4 311.3 255.5 309.0 249.7C306.7 243.9 304.3 237.0 302.0 231.0C299.7 225.0 297.7 219.0 295.0 213.5C292.3 208.0 289.2 203.1 286.0 198.0C282.8 192.9 279.2 187.2 275.7 183.0C272.2 178.8 268.8 175.8 265.0 173.0C261.2 170.2 257.3 167.9 253.0 166.0C248.7 164.1 243.5 162.8 239.0 161.5C234.5 160.2 230.4 159.1 225.7 158.0C221.0 156.9 215.6 155.7 211.0 155.0C206.4 154.3 202.0 153.6 198.0 153.8C194.0 154.0 190.3 154.8 187.0 156.0C183.7 157.2 180.8 158.5 178.0 160.8C175.2 163.1 172.2 166.3 170.0 170.0C167.8 173.7 166.1 178.3 164.5 183.0C162.9 187.7 161.4 192.9 160.5 198.0C159.6 203.1 159.2 208.0 159.0 213.5C158.8 219.0 158.8 224.9 159.0 231.0C159.2 237.1 159.3 243.3 160.0 250.0C160.7 256.7 161.7 263.8 163.0 271.0C164.3 278.2 165.2 284.7 168.0 293.0C170.8 301.3 174.8 311.8 180.0 321.0C185.2 330.2 192.1 339.8 199.5 348.5C206.9 357.2 216.2 366.6 224.5 373.5C232.8 380.4 240.8 384.9 249.5 390.0C258.2 395.1 267.8 397.8 277.0 404.0C286.2 410.2 297.3 420.6 305.0 427.0C312.7 433.4 318.3 438.1 323.0 442.6C327.7 447.1 330.7 450.3 333.4 454.0C336.2 457.7 338.7 462.2 339.5 465.0C340.3 467.8 338.8 470.3 338.0 470.5C337.2 470.7 335.5 466.8 335.0 466.0" fill="none" stroke="#140300" stroke-width="3.600" stroke-linecap="round" stroke-linejoin="round"/>
<path d="M307.6 244.0C307.8 241.3 308.3 233.1 309.0 228.0C309.7 222.9 310.5 218.5 311.8 213.5C313.1 208.5 314.7 203.1 317.0 198.0C319.3 192.9 322.0 188.0 325.7 183.0C329.4 178.0 334.3 172.8 339.0 168.0C343.7 163.2 349.0 157.4 354.0 154.0C359.0 150.6 364.0 148.9 369.0 147.5C374.0 146.1 379.0 145.1 384.0 145.5C389.0 145.9 394.0 147.5 399.0 150.0C404.0 152.5 409.0 156.2 414.0 160.5C419.0 164.8 424.0 169.2 429.0 175.5C434.0 181.8 439.4 190.1 444.0 198.0C448.6 205.9 453.2 214.7 456.5 223.0C459.8 231.3 462.3 239.7 464.0 248.0C465.7 256.3 466.5 265.1 466.5 273.0C466.5 280.9 465.7 288.0 464.0 295.5C462.3 303.0 459.7 311.2 456.5 318.0C453.3 324.8 450.2 329.9 444.8 336.0C439.4 342.1 432.2 348.4 424.0 354.5C415.8 360.6 404.6 366.2 395.6 372.6C386.5 379.0 377.0 386.1 369.7 393.0C362.4 399.9 356.5 406.6 351.6 414.0C346.6 421.4 342.8 430.1 340.0 437.4C337.2 444.7 336.2 451.1 334.7 458.0C333.2 464.9 331.7 471.9 330.8 478.8C329.9 485.7 329.1 493.3 329.5 499.6C329.9 505.9 332.8 513.6 333.4 516.4" fill="none" stroke="#140300" stroke-width="3.600" stroke-linecap="round" stroke-linejoin="round"/>
</svg>
<div style="left:435px;top:856px;width:81px;height:81px;border:1px solid #3a3a3a;border-radius:50%"></div>
<div style="left:1899px;top:73px;width:16px;height:893px;background:#efeff3"></div>
<div class="b" style="left:1900px;top:73px;width:11px;height:12px"><svg width="11" height="12" style="position:absolute;left:0;top:0"><path d="M2 7h7l-3.500-4z" fill="#fff"/></svg></div>
<div class="b" style="left:1900px;top:951px;width:11px;height:11px"><svg width="11" height="11" style="position:absolute;left:0;top:0"><path d="M2 4h7l-3.500 4z" fill="#fff"/></svg></div>
<div style="left:1900px;top:364px;width:12px;height:308px;background:#b0b0b0;border:1.500px solid #505050;border-radius:1px"></div>
<div style="left:368px;top:966px;width:1531px;height:16px;background:#efefef"></div>
<div style="left:1899px;top:966px;width:16px;height:16px;background:#f4f4f4"></div>
<div class="b" style="left:368px;top:967px;width:12px;height:11px"><svg width="12" height="11" style="position:absolute;left:0;top:0"><path d="M7.500 2v7l-4-3.500z" fill="#fff"/></svg></div>
<div class="b" style="left:1883px;top:967px;width:11px;height:11px"><svg width="11" height="11" style="position:absolute;left:0;top:0"><path d="M4 2v7l4-3.500z" fill="#fff"/></svg></div>
<div style="left:827px;top:968px;width:610px;height:11px;background:#b0b0b0;border:1.500px solid #505050;border-radius:1px"></div>
<div style="left:366px;top:986px;width:156px;height:20px;background:#b4b4fd;border:1px solid #8484dc;border-radius:2px"></div>
<svg width="14" height="17" viewBox="0 0 14 17" style="position:absolute;left:372px;top:990px;overflow:visible" ><path d="M1 0.500h8l4 4v12h-12z" fill="#fafafa" stroke="#b4b4c4" stroke-width="0.900"/><path d="M9 0.500v4h4" fill="#e8e8e8" stroke="#d0d0d8" stroke-width="0.600"/></svg>
<div class="t" style="left:387px;top:992px;color:#14144a">Новый холст.sai</div>
<div class="t" style="left:498px;top:990px;font-size:9px;color:#14144a">33%</div>
<div class="t" style="right:137px;top:1014px;letter-spacing:-0.170px">Использование памяти:32% (И1334MB/М4095MB)</div>
<div style="left:1792px;top:1012px;width:13.5px;height:11.5px;background:#e1e1e1;border:1px solid #d4d4d4;border-radius:2px"></div>
<div class="t" style="left:1780px;top:1013.500px;width:39.5px;text-align:center;font-size:10px;letter-spacing:-0.400px;font-family:'Liberation Mono',monospace;font-weight:bold;color:#000;transform:scaleX(0.57)">Shift</div>
<div style="left:1810.5px;top:1012px;width:13.5px;height:11.5px;background:#e1e1e1;border:1px solid #d4d4d4;border-radius:2px"></div>
<div class="t" style="left:1798.5px;top:1013.500px;width:39.5px;text-align:center;font-size:10px;letter-spacing:-0.400px;font-family:'Liberation Mono',monospace;font-weight:bold;color:#000;transform:scaleX(0.66)">Ctrl</div>
<div style="left:1828.8px;top:1012px;width:13.5px;height:11.5px;background:#e1e1e1;border:1px solid #d4d4d4;border-radius:2px"></div>
<div class="t" style="left:1816.8px;top:1013.500px;width:39.5px;text-align:center;font-size:10px;letter-spacing:-0.400px;font-family:'Liberation Mono',monospace;font-weight:bold;color:#000;transform:scaleX(0.69)">Alt</div>
<div style="left:1846.7px;top:1012px;width:13.5px;height:11.5px;background:#e1e1e1;border:1px solid #d4d4d4;border-radius:2px"></div>
<div class="t" style="left:1834.7px;top:1013.500px;width:39.5px;text-align:center;font-size:10px;letter-spacing:-0.400px;font-family:'Liberation Mono',monospace;font-weight:bold;color:#000;transform:scaleX(0.69)">SPC</div>
<div style="left:1864px;top:1012px;width:13.5px;height:11.5px;background:#e1e1e1;border:1px solid #d4d4d4;border-radius:2px"></div>
<div style="left:1882px;top:1012px;width:13.5px;height:11.5px;background:#e1e1e1;border:1px solid #d4d4d4;border-radius:2px"></div>
<div class="t" style="left:1870px;top:1013.500px;width:39.5px;text-align:center;font-size:10px;letter-spacing:-0.400px;font-family:'Liberation Mono',monospace;font-weight:bold;color:#000;transform:scaleX(0.69)">Any</div>
<div style="left:1900.5px;top:1012px;width:13.5px;height:11.5px;background:#e1e1e1;border:1px solid #d4d4d4;border-radius:2px"></div>
<svg width="17" height="16" viewBox="0 0 17 16" style="position:absolute;left:1863.5px;top:1011px;overflow:visible" ><path d="M8.500 2.500l2.600 2.800h-5.200zM8.500 13.500l2.600-2.800h-5.200zM2.500 8l2.800-2.600v5.200zM14.500 8l-2.800-2.600v5.200z" fill="#000"/><rect x="6.300" y="5.800" width="4.400" height="4.400" fill="none" stroke="#000" stroke-width="0.900"/></svg>
<svg width="17" height="16" viewBox="0 0 17 16" style="position:absolute;left:1900px;top:1011px;overflow:visible" ><path d="M3 13l1.500-3.500l7.500-7l2 2l-7.500 7z" fill="#fff" stroke="#000" stroke-width="0.900"/><path d="M3 13l1-2.500l1.500 1.500z" fill="#000"/></svg>
<div style="left:0px;top:1030px;width:1920px;height:50px;background:#2b2b2f"></div>
<div style="left:180px;top:1031px;width:427px;height:49px;background:#cecece"></div>
<svg width="21" height="21" viewBox="0 0 21 21" style="position:absolute;left:20px;top:1044px;overflow:visible" ><path d="M0 3.200l8.300-1.200v8.200h-8.300zM9.500 1.800l11-1.700v10.100h-11zM0 11.300h8.300v8.200l-8.300-1.200zM9.500 11.300h11v10l-11-1.600z" fill="#fff"/></svg>
<svg width="24" height="26" viewBox="0 0 24 26" style="position:absolute;left:78px;top:1042px;overflow:visible" ><circle cx="14.500" cy="9.500" r="6.800" fill="none" stroke="#fff" stroke-width="1.600"/><path d="M10 14.500l-8 9" stroke="#fff" stroke-width="1.800"/></svg>
<svg width="24" height="22" viewBox="0 0 24 22" style="position:absolute;left:138px;top:1044px;overflow:visible" ><g fill="none" stroke="#fff" stroke-width="1.500"><rect x="3" y="5.500" width="11" height="9.500"/><path d="M1.500 1h14M1.500 19.500h14"/><path d="M1.500 0.300v3M15.500 0.300v3M1.500 17v3.200M15.500 17v3.200"/><path d="M20.500 0.500v20"/></g><rect x="19" y="6" width="3" height="4" fill="#fff"/></svg>
<div class="t" style="left:197px;top:1045px;font-size:19.200px;line-height:24px;color:#1c1c1c;letter-spacing:-0.150px">Скажите «Слушай, Алиса»</div>
<svg width="18" height="28" viewBox="0 0 18 28" style="position:absolute;left:568px;top:1040px;overflow:visible" ><rect x="5.500" y="1" width="7" height="15" rx="3.500" fill="#111"/><path d="M2.500 11.500a6.500 6.500 0 0 0 13 0" fill="none" stroke="#111" stroke-width="1.600"/><path d="M9 18v6" stroke="#111" stroke-width="1.800"/></svg>
<div style="left:620px;top:1042px;width:1px;height:26px;background:#5a5a5e"></div>
<svg width="30" height="26" viewBox="0 0 30 26" style="position:absolute;left:652px;top:1041px;overflow:visible" ><path d="M1 3h8l2 2.500h13v3h-23z" fill="#e8b63c"/><rect x="1" y="6.500" width="26" height="17" fill="#f6d267"/><rect x="1" y="6.500" width="26" height="3" fill="#f9dc84"/><path d="M6 13.500h16v10h-4v-5h-8v5h-4z" fill="#3f9ad6"/><rect x="10" y="18.500" width="8" height="5" fill="#f6f6f6"/></svg>
<div style="left:642px;top:1077px;width:51px;height:3px;background:#96dde8"></div>
<svg width="28" height="33" viewBox="0 0 28 33" style="position:absolute;left:716px;top:1039px;overflow:visible" ><defs><linearGradient id="p3" x1="0" y1="0.200" x2="1" y2="0.600"><stop offset="0" stop-color="#f0509a"/><stop offset="0.350" stop-color="#a060e8"/><stop offset="0.700" stop-color="#3aa0f0"/><stop offset="1" stop-color="#30d0d8"/></linearGradient><linearGradient id="p3b" x1="0" y1="0" x2="0" y2="1"><stop offset="0" stop-color="#f03878"/><stop offset="0.500" stop-color="#f08030"/><stop offset="1" stop-color="#f8c830"/></linearGradient></defs><path d="M9 30q0-6-3.500-10q-5-6-2.500-12.500q3-6.500 10.500-6.500q8 0 10.500 6.500q2 7-4.500 12.500q-5 4-8.500 10.500z" fill="url(#p3)"/><path d="M5 18q5 5 11 3q-4 4-6 9.500q-1 1-1.200-0.500q0-6-3.800-12z" fill="url(#p3b)"/></svg>
<svg width="31" height="31" viewBox="0 0 31 31" style="position:absolute;left:776px;top:1040px;overflow:visible" ><circle cx="15.500" cy="15.500" r="14.800" fill="#f3f1f0"/><path d="M8 8.500l7.500 8.500v9M23 8.500l-7.500 8.500" fill="none" stroke="#cc1122" stroke-width="3.400" stroke-linecap="round" stroke-linejoin="round"/></svg>
<div style="left:766px;top:1077px;width:51px;height:3px;background:#96dde8"></div>
<div style="left:822px;top:1030px;width:62px;height:50px;background:#58585b"></div>
<div style="left:822px;top:1077px;width:62px;height:3px;background:#a6e2ec"></div>
<svg width="31" height="31" viewBox="0 0 31 31" style="position:absolute;left:838px;top:1040px;overflow:visible" ><defs><radialGradient id="lg2" cx="0.500" cy="0.500" r="0.550"><stop offset="0" stop-color="#fbfad0"/><stop offset="0.450" stop-color="#dcec70"/><stop offset="0.800" stop-color="#7cc840"/><stop offset="1" stop-color="#38a038"/></radialGradient><linearGradient id="sq" x1="0" y1="0" x2="0" y2="1"><stop offset="0" stop-color="#2a8a48"/><stop offset="1" stop-color="#0e4a22"/></linearGradient><linearGradient id="rb" x1="0" y1="0" x2="0" y2="1"><stop offset="0" stop-color="#f0d030"/><stop offset="0.500" stop-color="#f07828"/><stop offset="1" stop-color="#d83030"/></linearGradient></defs><path d="M1 4q0-3 3-3h12q13 1 13.500 14q0 6-2.500 9l-2 6h-24z" fill="url(#sq)"/><circle cx="17" cy="13.500" r="12" fill="url(#lg2)"/><path d="M23 3.200a12 12 0 0 1 3.500 18" fill="none" stroke="url(#rb)" stroke-width="3"/><path d="M17 13.500l-8-6M17 13.500l-1-10M17 13.500l8-5M17 13.500l-11 2" stroke="#f4f8c8" stroke-width="0.800" opacity=".700"/><path d="M1 14.500l26 12.500" stroke="#5a3a18" stroke-width="5"/><path d="M1 13.800l26 12.500" stroke="#d8b868" stroke-width="1.600"/><path d="M22 24l6 3.200l-1 2z" fill="#f0e8d0"/></svg>
<svg width="30" height="30" viewBox="0 0 30 30" style="position:absolute;left:1435px;top:1041px;overflow:visible" ><circle cx="13.500" cy="14" r="11" fill="#fff" stroke="#38a8e0" stroke-width="2.600"/><path d="M9.800 11q0-4 4-4q4 0 4 3.600q0 2.400-2.400 3.600q-1.400 0.900-1.400 2.600" fill="none" stroke="#1c90d0" stroke-width="2.700"/><circle cx="14" cy="20.300" r="1.700" fill="#1c90d0"/><circle cx="23.500" cy="22" r="4.300" fill="#38a8e0"/><rect x="22.800" y="20.500" width="1.400" height="4" fill="#fff"/><rect x="22.800" y="18.700" width="1.400" height="1.200" fill="#fff"/></svg>
<svg width="24" height="22" viewBox="0 0 24 22" style="position:absolute;left:1493px;top:1044px;overflow:visible" ><g fill="none" stroke="#fff" stroke-width="1.500"><circle cx="14.500" cy="5.500" r="3.500"/><path d="M8.500 16q0.500-6.500 6-6.500q5.500 0 6 5"/><circle cx="7" cy="11.500" r="2.800"/><path d="M1.500 20.500q0.500-5.500 5.500-5.500q4.500 0 5.500 5"/></g></svg>
<svg width="18" height="12" viewBox="0 0 18 12" style="position:absolute;left:1539px;top:1048px;overflow:visible" ><path d="M1.500 10l7.500-8l7.500 8" fill="none" stroke="#fff" stroke-width="1.500"/></svg>
<svg width="22" height="20" viewBox="0 0 22 20" style="position:absolute;left:1567px;top:1045px;overflow:visible" ><path d="M5.500 1l5 3.200l-5 3.200l-5-3.200zM15.500 1l5 3.200l-5 3.200l-5-3.200zM5.500 7.800l5 3.200l-5 3.200l-5-3.200zM15.500 7.800l5 3.200l-5 3.200l-5-3.200zM10.500 12.500l4.500 3l-4.500 3l-4.500-3z" fill="#fff"/></svg>
<svg width="24" height="18" viewBox="0 0 24 18" style="position:absolute;left:1597px;top:1046px;overflow:visible" ><rect x="5.500" y="5.500" width="16" height="9.500" fill="none" stroke="#fff" stroke-width="1.500"/><rect x="21.500" y="8" width="2" height="4.500" fill="#fff"/><rect x="7.500" y="7.500" width="12" height="5.500" fill="#fff"/><path d="M1 1.500h4v4.500h-4zM2 0v1.500M4 0v1.500M3 6v2.500h3" stroke="#fff" stroke-width="1" fill="#fff"/></svg>
<svg width="22" height="20" viewBox="0 0 22 20" style="position:absolute;left:1628px;top:1045px;overflow:visible" ><g fill="none" stroke="#aaa" stroke-width="1.500"><path d="M1.500 18a16.500 16.500 0 0 1 16.500-16.500"/><path d="M6 18a12 12 0 0 1 12-12" stroke="#fff"/><path d="M10.500 18a7.500 7.500 0 0 1 7.500-7.500" stroke="#fff"/></g><circle cx="16" cy="17" r="2" fill="#fff"/></svg>
<svg width="22" height="20" viewBox="0 0 22 20" style="position:absolute;left:1656px;top:1045px;overflow:visible" ><path d="M1.500 7h3.500l4.500-4.500v15l-4.500-4.500h-3.500z" fill="none" stroke="#fff" stroke-width="1.400"/><path d="M12.500 6.500q2 3.500 0 7" fill="none" stroke="#fff" stroke-width="1.300"/><path d="M15.500 4q3.500 6 0 12" fill="none" stroke="#ccc" stroke-width="1.300"/><path d="M18.500 1.500q5 8.500 0 17" fill="none" stroke="#666" stroke-width="1.300"/></svg>
<svg width="26" height="24" viewBox="0 0 26 24" style="position:absolute;left:1690px;top:1044px;overflow:visible" ><g fill="none" stroke="#fff" stroke-width="1.500"><path d="M6 19.500l2-5.500l9-11q2-1.500 3 0.500q0.500 1.500-0.500 2.500l-9.500 11z"/><path d="M2 15q-1.500 4 2.500 5.500M13 11.500q5-2 8 0.500q2 2.500-4 3.500"/></g></svg>
<div class="t" style="left:1732px;top:1046px;font-size:13.500px;line-height:20px;color:#fff;letter-spacing:-0.200px">РУС</div>
<div class="t" style="left:1770px;top:1034px;width:80px;text-align:center;font-size:14.500px;line-height:20px;color:#fff">0:18</div>
<div class="t" style="left:1765px;top:1057px;width:90px;text-align:center;font-size:14.500px;line-height:20px;color:#fff;letter-spacing:-0.300px">09.07.2018</div>
<svg width="24" height="22" viewBox="0 0 24 22" style="position:absolute;left:1867px;top:1045px;overflow:visible" ><path d="M1.500 1.500h20v15h-8l-2.500 3l-2.500-3h-7z" fill="none" stroke="#fff" stroke-width="1.500"/></svg>
<div style="left:1914px;top:1030px;width:1px;height:50px;background:#55565a"></div>
</body></html>
